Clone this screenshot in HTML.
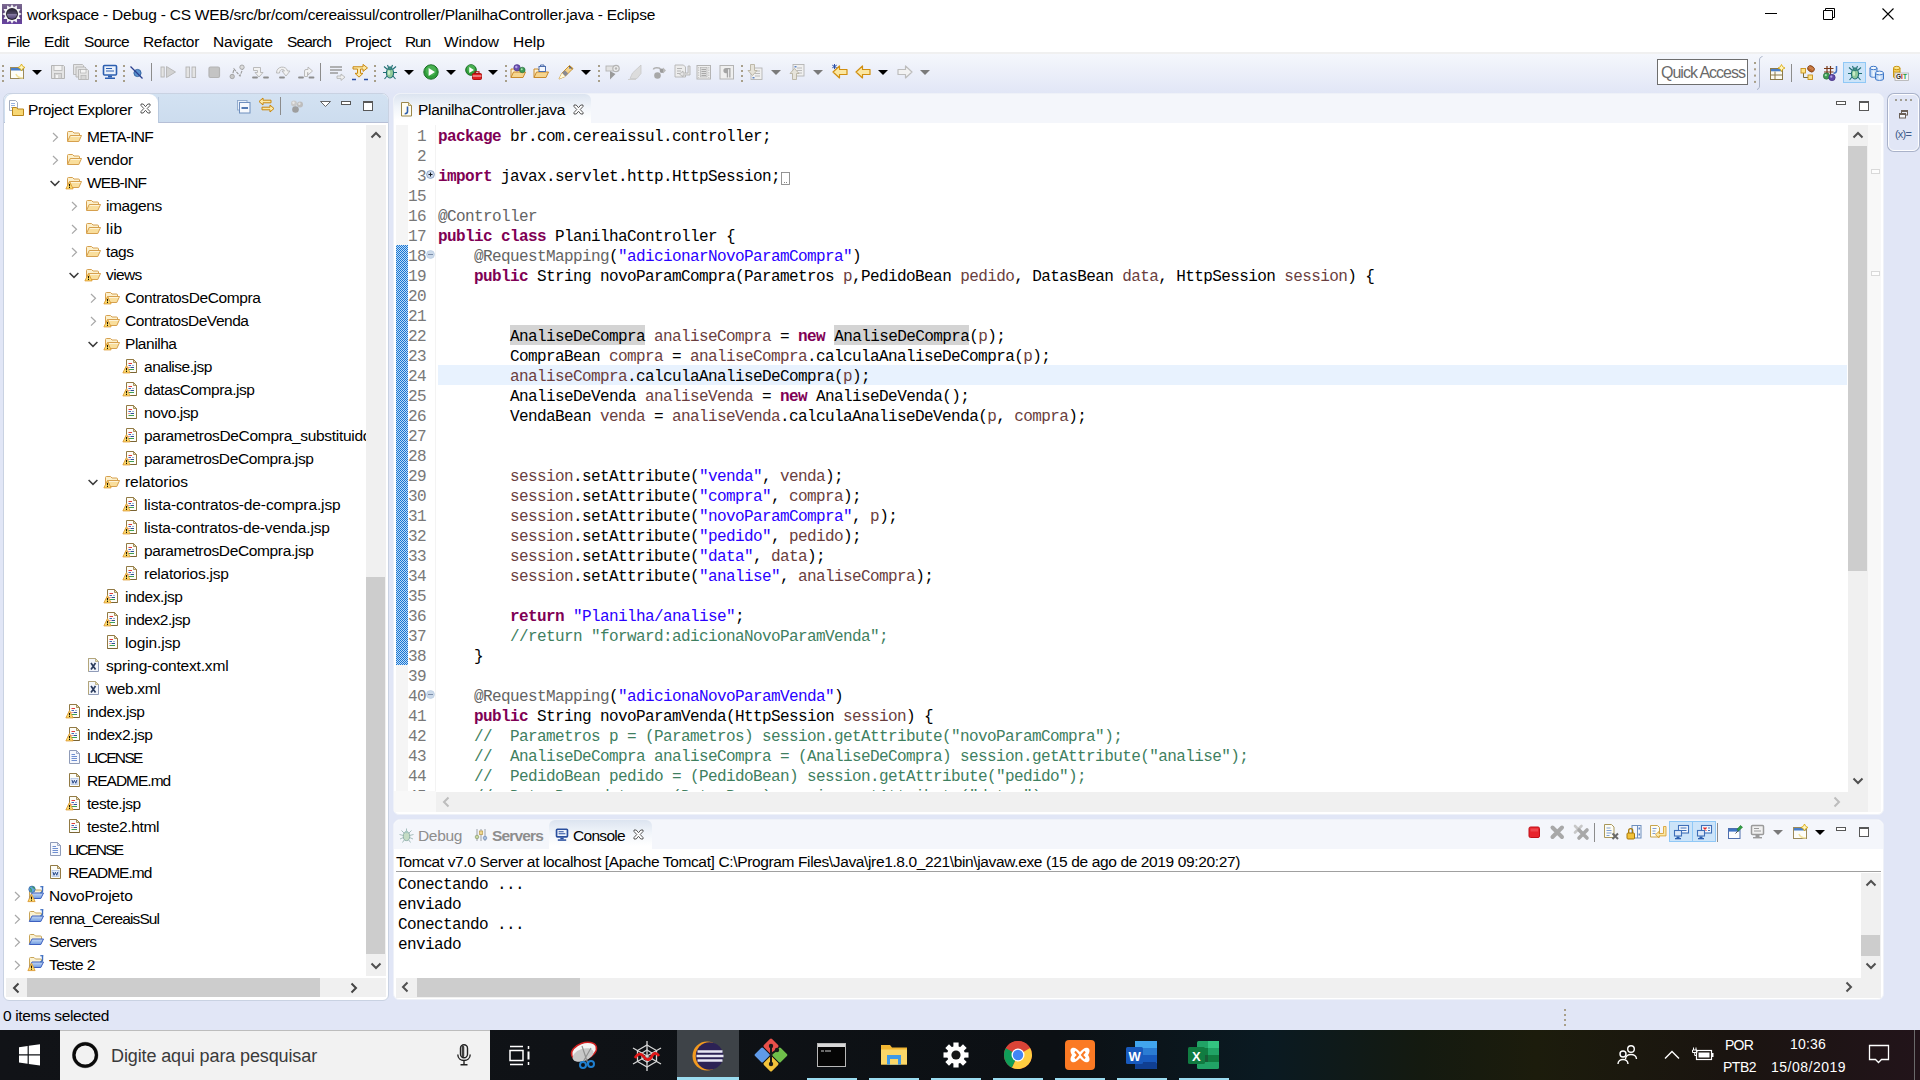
<!DOCTYPE html>
<html lang="pt-BR"><head><meta charset="utf-8"><title>workspace - Debug - Eclipse</title>
<style>
html,body{margin:0;padding:0;background:#e1e6f6;}
body{width:1920px;height:1080px;overflow:hidden;position:relative;font-family:"Liberation Sans",sans-serif;}
#root{position:absolute;left:0;top:0;width:1920px;height:1080px;overflow:hidden;background:#e1e6f6;}
.t{position:absolute;white-space:pre;line-height:1;}
.a{position:absolute;}
svg{position:absolute;overflow:visible;}
.code{position:absolute;white-space:pre;font-family:"Liberation Mono",monospace;font-size:16px;letter-spacing:-0.6px;line-height:20px;color:#000;}
.k{color:#7f0055;font-weight:bold;}
.s{color:#2a00ff;}
.c{color:#3f7f5f;}
.an{color:#646464;}
.v{color:#6a3e3e;}
.oc{background:#d4d4d4;display:inline-block;height:20px;vertical-align:top;margin-top:-2px;padding-top:2px;box-sizing:border-box;}
.ln{position:absolute;font-family:"Liberation Mono",monospace;font-size:16px;letter-spacing:-0.6px;line-height:20px;color:#787878;text-align:right;white-space:pre;}

</style></head><body>
<div id="root">
<div class="a" style="left:0px;top:0px;width:1920px;height:30px;background:#fff;"></div><span id="t1" class="t" style="left:27px;top:7px;font-size:15.5px;color:#000;font-weight:normal;font-family:'Liberation Sans',sans-serif;letter-spacing:-0.231px;">workspace - Debug - CS WEB/src/br/com/cereaissul/controller/PlanilhaController.java - Eclipse</span><svg style="left:1760px;top:4px" width="140" height="22" viewBox="0 0 140 22"><path d="M5 9.500h12" stroke="#000" stroke-width="1" fill="none"/><path d="M63.500 6.500h9v9h-9z M65.500 6.500v-2h9v9h-2" stroke="#000" stroke-width="1" fill="none"/><path d="M122.500 4.500l11 11M133.500 4.500l-11 11" stroke="#000" stroke-width="1.100" fill="none"/></svg><svg style="left:2px;top:4px" width="20" height="20" viewBox="0 0 20 20"><defs><linearGradient id="eg" x1="0" y1="0" x2="0" y2="1"><stop offset="0" stop-color="#7c6a92"/><stop offset=".5" stop-color="#5b4479"/><stop offset="1" stop-color="#6843a2"/></linearGradient><linearGradient id="eb" x1="0" y1="0" x2="0" y2="1"><stop offset="0" stop-color="#2a2438"/><stop offset=".45" stop-color="#4a4260"/><stop offset=".55" stop-color="#8478a0"/><stop offset="1" stop-color="#4a3a70"/></linearGradient></defs><rect x="0" y="0" width="20" height="20" fill="url(#eg)"/><polygon points="10.00,0.20 11.81,3.24 14.90,1.51 14.95,5.05 18.49,5.10 16.76,8.19 19.80,10.00 16.76,11.81 18.49,14.90 14.95,14.95 14.90,18.49 11.81,16.76 10.00,19.80 8.19,16.76 5.10,18.49 5.05,14.95 1.51,14.90 3.24,11.81 0.20,10.00 3.24,8.19 1.51,5.10 5.05,5.05 5.10,1.51 8.19,3.24" fill="#f4f4f6"/><circle cx="10" cy="10" r="6" fill="#26222e"/><circle cx="10" cy="10" r="5" fill="url(#eb)"/></svg><div class="a" style="left:0px;top:30px;width:1920px;height:22px;background:#fff;"></div><div class="a" style="left:0px;top:52px;width:1920px;height:2px;background:#f0f0f0;"></div><span id="t2" class="t" style="left:7px;top:34px;font-size:15.5px;color:#000;font-weight:normal;font-family:'Liberation Sans',sans-serif;letter-spacing:-0.496px;">File</span><span id="t3" class="t" style="left:44px;top:34px;font-size:15.5px;color:#000;font-weight:normal;font-family:'Liberation Sans',sans-serif;letter-spacing:-0.430px;">Edit</span><span id="t4" class="t" style="left:84px;top:34px;font-size:15.5px;color:#000;font-weight:normal;font-family:'Liberation Sans',sans-serif;letter-spacing:-0.685px;">Source</span><span id="t5" class="t" style="left:143px;top:34px;font-size:15.5px;color:#000;font-weight:normal;font-family:'Liberation Sans',sans-serif;letter-spacing:-0.324px;">Refactor</span><span id="t6" class="t" style="left:213px;top:34px;font-size:15.5px;color:#000;font-weight:normal;font-family:'Liberation Sans',sans-serif;letter-spacing:-0.148px;">Navigate</span><span id="t7" class="t" style="left:287px;top:34px;font-size:15.5px;color:#000;font-weight:normal;font-family:'Liberation Sans',sans-serif;letter-spacing:-0.854px;">Search</span><span id="t8" class="t" style="left:345px;top:34px;font-size:15.5px;color:#000;font-weight:normal;font-family:'Liberation Sans',sans-serif;letter-spacing:-0.321px;">Project</span><span id="t9" class="t" style="left:405px;top:34px;font-size:15.5px;color:#000;font-weight:normal;font-family:'Liberation Sans',sans-serif;letter-spacing:-1.146px;">Run</span><span id="t10" class="t" style="left:444px;top:34px;font-size:15.5px;color:#000;font-weight:normal;font-family:'Liberation Sans',sans-serif;letter-spacing:-0.023px;">Window</span><span id="t11" class="t" style="left:513px;top:34px;font-size:15.5px;color:#000;font-weight:normal;font-family:'Liberation Sans',sans-serif;letter-spacing:0.027px;">Help</span><div class="a" style="left:0px;top:54px;width:1920px;height:39px;background:linear-gradient(#f5f7fc,#e1e6f6);"></div><svg style="left:2px;top:65px" width="2" height="20" viewBox="0 0 2 20"><rect x="0" y="0" width="2" height="2" fill="#a89f8a"/><rect x="0" y="5" width="2" height="2" fill="#a89f8a"/><rect x="0" y="10" width="2" height="2" fill="#a89f8a"/><rect x="0" y="15" width="2" height="2" fill="#a89f8a"/></svg><svg style="left:9px;top:64px" width="16" height="16" viewBox="0 0 16 16"><rect x="1.5" y="3.5" width="13" height="11" fill="#fdfdf8" stroke="#9c8a5a"/><rect x="2" y="4" width="12" height="2.5" fill="#4a7fc9"/><path d="M14 14c-3 0-6-1-7-4" stroke="#f2e3a0" stroke-width="1.5" fill="none"/><path d="M12.5 0l1.2 2.3 2.3 1.2-2.3 1.2-1.2 2.3-1.2-2.3L9 3.5l2.3-1.2z" fill="#fff6c0" stroke="#d9a400" stroke-width=".8"/></svg><svg style="left:32px;top:70px" width="10" height="5" viewBox="0 0 10 5"><path d="M0 0h10l-5 5z" fill="#000"/></svg><svg style="left:50px;top:64px" width="16" height="16" viewBox="0 0 16 16"><path d="M1.5 1.5h12l1 1v12h-13z" fill="#e4e4e4" stroke="#b4b4b4"/><rect x="4" y="1.5" width="8" height="5" fill="#f4f4f4" stroke="#b4b4b4" stroke-width=".8"/><rect x="4.5" y="9.5" width="7" height="5" fill="#d6d6d6" stroke="#b4b4b4" stroke-width=".8"/><rect x="6" y="11" width="2" height="3" fill="#f4f4f4"/></svg><svg style="left:73px;top:64px" width="16" height="16" viewBox="0 0 16 16"><path d="M.5 .5h9l1 1v9h-10z" fill="#e4e4e4" stroke="#b4b4b4" stroke-width=".9"/><path d="M3 3h9l1 1v9h-10z" fill="#e4e4e4" stroke="#b4b4b4" stroke-width=".9"/><path d="M5.5 5.5h9l1 1v9h-10z" fill="#e4e4e4" stroke="#b4b4b4" stroke-width=".9"/><rect x="7.5" y="5.5" width="5.5" height="3.5" fill="#f4f4f4" stroke="#b4b4b4" stroke-width=".7"/><rect x="8" y="11.5" width="5" height="4" fill="#d6d6d6" stroke="#b4b4b4" stroke-width=".7"/></svg><svg style="left:95px;top:65px" width="2" height="20" viewBox="0 0 2 20"><rect x="0" y="0" width="2" height="2" fill="#a89f8a"/><rect x="0" y="5" width="2" height="2" fill="#a89f8a"/><rect x="0" y="10" width="2" height="2" fill="#a89f8a"/><rect x="0" y="15" width="2" height="2" fill="#a89f8a"/></svg><svg style="left:102px;top:64px" width="16" height="16" viewBox="0 0 16 16"><rect x="1.5" y="1.5" width="13" height="9.5" rx="1" fill="#eaf1fb" stroke="#2d5fb0" stroke-width="1.6"/><path d="M4 4.5h6M4 7h8" stroke="#2d5fb0" stroke-width="1.1"/><rect x="6" y="11.5" width="4" height="2" fill="#2d5fb0"/><rect x="3" y="13.5" width="10" height="1.5" fill="#2d5fb0"/></svg><svg style="left:123px;top:65px" width="2" height="20" viewBox="0 0 2 20"><rect x="0" y="0" width="2" height="2" fill="#a89f8a"/><rect x="0" y="5" width="2" height="2" fill="#a89f8a"/><rect x="0" y="10" width="2" height="2" fill="#a89f8a"/><rect x="0" y="15" width="2" height="2" fill="#a89f8a"/></svg><svg style="left:129px;top:64px" width="16" height="16" viewBox="0 0 16 16"><circle cx="8.5" cy="9" r="3.6" fill="#5a93cf" stroke="#2f5f9e" stroke-width=".9"/><path d="M1.5 2.5l12 12" stroke="#2a3f8f" stroke-width="1.3"/></svg><div class="a" style="left:151px;top:63px;width:1px;height:18px;background:#8c8c8c;"></div><svg style="left:160px;top:64px" width="16" height="16" viewBox="0 0 16 16"><rect x="1" y="3" width="3.2" height="10" fill="#e4e4e4" stroke="#b4b4b4" stroke-width=".9"/><path d="M6.5 2.5l9 5.5-9 5.5z" fill="#d2d2d2" stroke="#b4b4b4" stroke-width=".9"/></svg><svg style="left:183px;top:64px" width="16" height="16" viewBox="0 0 16 16"><rect x="3" y="3" width="3.6" height="10.5" fill="#e4e4e4" stroke="#b4b4b4" stroke-width=".9"/><rect x="9" y="3" width="3.6" height="10.5" fill="#e4e4e4" stroke="#b4b4b4" stroke-width=".9"/></svg><svg style="left:206px;top:64px" width="16" height="16" viewBox="0 0 16 16"><rect x="3" y="3" width="10.5" height="10.5" rx="1.5" fill="#c4c4c4" stroke="#b4b4b4" stroke-width="1.2"/></svg><svg style="left:229px;top:64px" width="16" height="16" viewBox="0 0 16 16"><path d="M3 13l2-8 6 7 3-8" stroke="#9a9a9a" stroke-width="1.1" fill="none" stroke-dasharray="3 1"/><circle cx="3.2" cy="12.5" r="2.2" fill="#c8c8c8" stroke="#9a9a9a" stroke-width=".8"/><circle cx="13" cy="3.2" r="2.2" fill="#dcdcdc" stroke="#9a9a9a" stroke-width=".8"/></svg><svg style="left:252px;top:64px" width="16" height="16" viewBox="0 0 16 16"><path d="M1.5 3.5h7v5h2.5l-4 4.5-4-4.5h2.5v-2h-4z" fill="#f2f2f2" stroke="#b4b4b4" stroke-width=".9" stroke-linejoin="round"/><path d="M1 13.5h4M12 13.5h4" stroke="#8e8e8e" stroke-width="1.8" stroke-linecap="round"/></svg><svg style="left:275px;top:64px" width="16" height="16" viewBox="0 0 16 16"><path d="M1.5 9c0-7.5 10-7.5 11-2h2.5l-4 5-4-5h2.5c-1-2.5-5-2-5 2z" fill="#f2f2f2" stroke="#b4b4b4" stroke-width=".9" stroke-linejoin="round"/><path d="M5 13.5h4" stroke="#8e8e8e" stroke-width="1.8" stroke-linecap="round"/></svg><svg style="left:298px;top:64px" width="16" height="16" viewBox="0 0 16 16"><path d="M6.5 12.5v-5.500q0-1.500 1.500-1.500h2v-2.500l4.500 4-4.500 4v-2.500h-.5v4z" fill="#f2f2f2" stroke="#b4b4b4" stroke-width=".9" stroke-linejoin="round"/><path d="M1 13.5h4M11.5 13.5h4" stroke="#8e8e8e" stroke-width="1.8" stroke-linecap="round"/></svg><div class="a" style="left:320px;top:63px;width:1px;height:18px;background:#8c8c8c;"></div><svg style="left:329px;top:64px" width="16" height="16" viewBox="0 0 16 16"><path d="M1 3h12M1 6h12M1 9h8" stroke="#9a9a9a" stroke-width="1.5"/><path d="M8 12h4v-2l4 3.200-4 3.200v-2h-4z" fill="#f0f0f0" stroke="#b4b4b4" stroke-width=".9"/></svg><svg style="left:352px;top:64px" width="16" height="16" viewBox="0 0 16 16"><path d="M1 4.500h10v-2.500l4.500 3.700-4.500 3.700v-2.500h-2.500v4.500h2.500l-4 4-4-4h2.500v-4.500h-4.500z" fill="#fbe8a6" stroke="#c8860a" stroke-width="1" transform="translate(0,-1.500) scale(1,.95)"/><path d="M0 15.500h4M12 15.500h4" stroke="#2a4fa8" stroke-width="1.600"/></svg><svg style="left:374px;top:65px" width="2" height="20" viewBox="0 0 2 20"><rect x="0" y="0" width="2" height="2" fill="#a89f8a"/><rect x="0" y="5" width="2" height="2" fill="#a89f8a"/><rect x="0" y="10" width="2" height="2" fill="#a89f8a"/><rect x="0" y="15" width="2" height="2" fill="#a89f8a"/></svg><svg style="left:382px;top:64px" width="16" height="16" viewBox="0 0 16 16"><g stroke="#1f6e72" stroke-width="1.1" fill="none"><path d="M5.500 5.500L2 2.500M10.500 5.500L14 2.500M4.500 8.500H1M11.500 8.500H15M5.500 11.500L2.500 15M10.500 11.500L13.500 15M6.500 3.500L5.500 1M9.500 3.500L10.500 1"/></g><ellipse cx="8" cy="9" rx="3.600" ry="5" fill="#8fc89a" stroke="#1f6e72" stroke-width="1.100"/><ellipse cx="8" cy="4.300" rx="2" ry="1.500" fill="#3f8f86" stroke="#1f6e72" stroke-width=".8"/><ellipse cx="7" cy="8.500" rx="1.200" ry="2.500" fill="#c9ecc8"/></svg><svg style="left:404px;top:70px" width="10" height="5" viewBox="0 0 10 5"><path d="M0 0h10l-5 5z" fill="#000"/></svg><svg style="left:423px;top:64px" width="16" height="16" viewBox="0 0 16 16"><circle cx="8" cy="8" r="7.2" fill="#2f9e3a" stroke="#1d6e28" stroke-width="1"/><circle cx="8" cy="6.500" r="5.184" fill="#5cc064" opacity=".55"/><path d="M5.624 4.039999999999999L11.96 8L5.624 11.96z" fill="#fff"/></svg><svg style="left:446px;top:70px" width="10" height="5" viewBox="0 0 10 5"><path d="M0 0h10l-5 5z" fill="#000"/></svg><svg style="left:463px;top:62px" width="16" height="16" viewBox="0 0 16 16"><circle cx="8" cy="8" r="5.3" fill="#2f9e3a" stroke="#1d6e28" stroke-width="1"/><circle cx="8" cy="6.500" r="3.816" fill="#5cc064" opacity=".55"/><path d="M6.2509999999999994 5.085L10.915 8L6.2509999999999994 10.915z" fill="#fff"/></svg><svg style="left:472px;top:71px" width="10" height="9" viewBox="0 0 10 9"><rect x=".500" y="2.500" width="9" height="6" rx="1" fill="#e02020" stroke="#a80808" stroke-width=".9"/><path d="M3 2.500v-1.800h4v1.800" fill="none" stroke="#a80808" stroke-width="1.100"/><path d="M.500 5h9" stroke="#fff" stroke-width=".8"/></svg><svg style="left:488px;top:70px" width="10" height="5" viewBox="0 0 10 5"><path d="M0 0h10l-5 5z" fill="#000"/></svg><svg style="left:505px;top:65px" width="2" height="20" viewBox="0 0 2 20"><rect x="0" y="0" width="2" height="2" fill="#a89f8a"/><rect x="0" y="5" width="2" height="2" fill="#a89f8a"/><rect x="0" y="10" width="2" height="2" fill="#a89f8a"/><rect x="0" y="15" width="2" height="2" fill="#a89f8a"/></svg><svg style="left:510px;top:64px" width="16" height="16" viewBox="0 0 16 16"><path d="M1 13.500v-8.500h4l1.500 1.500h6v2" fill="#fdf1cf" stroke="#c98a2c" stroke-width="1"/><path d="M1 13.500l2.500-5.500h12l-2.500 5.500z" fill="#f6d58e" stroke="#c98a2c" stroke-width="1"/><circle cx="7" cy="3.800" r="3.200" fill="#6a4fb0" stroke="#473287" stroke-width=".6"/><circle cx="6.300" cy="3" r="1.200" fill="#b7a6e6"/><circle cx="12.300" cy="6" r="2.800" fill="#3d9a55" stroke="#256b38" stroke-width=".6"/><circle cx="11.700" cy="5.200" r="1" fill="#a7e0b0"/></svg><svg style="left:533px;top:64px" width="16" height="16" viewBox="0 0 16 16"><path d="M1 13.500v-8.500h4l1.500 1.500h6v2" fill="#fdf1cf" stroke="#c98a2c" stroke-width="1"/><path d="M1 13.500l2.500-5.500h12l-2.500 5.500z" fill="#f6d58e" stroke="#c98a2c" stroke-width="1"/><rect x="6" y="2.500" width="6.500" height="5" fill="#f4f7fd" stroke="#4f6fae" stroke-width="1"/><path d="M7.500 2.500v-1.500h3.500v1.500" stroke="#4f6fae" fill="none" stroke-width="1"/></svg><svg style="left:558px;top:64px" width="16" height="16" viewBox="0 0 16 16"><path d="M1 15l3-6 7.500-7.500 3.500 3-8 8z" fill="#f4d28a" stroke="#c58a20" stroke-width=".9"/><path d="M4 9l3.200 3.400 3-3-3.300-3.200z" fill="#8a8a92"/><path d="M11 2l3.500 3" stroke="#7a5a20" stroke-width="1"/><circle cx="12" cy="3.800" r=".9" fill="#3f5fae"/><path d="M1 15l3-6 3.200 3.400z" fill="#fff8d8"/></svg><svg style="left:581px;top:70px" width="10" height="5" viewBox="0 0 10 5"><path d="M0 0h10l-5 5z" fill="#000"/></svg><svg style="left:598px;top:65px" width="2" height="20" viewBox="0 0 2 20"><rect x="0" y="0" width="2" height="2" fill="#a89f8a"/><rect x="0" y="5" width="2" height="2" fill="#a89f8a"/><rect x="0" y="10" width="2" height="2" fill="#a89f8a"/><rect x="0" y="15" width="2" height="2" fill="#a89f8a"/></svg><svg style="left:605px;top:64px" width="16" height="16" viewBox="0 0 16 16"><rect x="1" y="2" width="8" height="5" fill="#e2e2e2" stroke="#b4b4b4" stroke-width=".9"/><circle cx="11" cy="4.500" r="3.200" fill="#ececec" stroke="#b4b4b4" stroke-width="1.200"/><circle cx="11" cy="4.500" r="1.200" fill="#b4b4b4"/><path d="M5 7v8.500l5.500-5.500z" fill="#9a9a9a"/></svg><svg style="left:628px;top:64px" width="16" height="16" viewBox="0 0 16 16"><path d="M2 14.500l2.500-5.500 8.500-8v8.500l-4 5z" fill="#dcdcdc" stroke="#c8c8c8" stroke-width=".8"/><path d="M0 15.500h8" stroke="#cfcfcf" stroke-width="1"/></svg><svg style="left:651px;top:64px" width="16" height="16" viewBox="0 0 16 16"><circle cx="6.500" cy="11.500" r="3.300" fill="#a8a8a8"/><path d="M2.500 5.500c0-2.500 6.500-2.500 7 0" stroke="#b0b0b0" stroke-width="1.500" fill="none"/><circle cx="11" cy="6.800" r="2.300" fill="#9c9c9c"/><path d="M12 3.500l3 3-3 3" fill="#b8b8b8"/></svg><svg style="left:674px;top:64px" width="16" height="16" viewBox="0 0 16 16"><path d="M1 1h8.500l2 2v10h-10.500z" fill="#ededed" stroke="#b4b4b4" stroke-width=".9"/><path d="M3 4.500h5M3 7h4M3 9.500h3" stroke="#b4b4b4" stroke-width="1"/><path d="M14 2v7h-5v-2l-3.500 3 3.500 3v-2h7v-9z" fill="#e4e4e4" stroke="#b4b4b4" stroke-width=".9"/></svg><svg style="left:696px;top:64px" width="16" height="16" viewBox="0 0 16 16"><rect x="1" y="1.500" width="13.500" height="13.500" fill="#efefef" stroke="#b4b4b4" stroke-width="1"/><rect x="4.500" y="3.500" width="6.500" height="9.500" fill="#dedede" stroke="#b4b4b4" stroke-width=".7"/><path d="M5.500 5.500h4.500M5.500 7.500h4.500M5.500 9.500h4.500M5.500 11.500h4.500" stroke="#9a9a9a" stroke-width=".8"/><path d="M2.700 3v11M12.800 3v11" stroke="#b4b4b4" stroke-width=".8" stroke-dasharray="1.500 1"/></svg><svg style="left:719px;top:64px" width="16" height="16" viewBox="0 0 16 16"><rect x="1" y="1.500" width="13.500" height="13.500" fill="#efefef" stroke="#b4b4b4" stroke-width="1"/><path d="M11.500 4h-4.500a2.600 2.600 0 0 0 0 5.200h.8v4.300h1.300v-8.300h1.100v8.300h1.300z" fill="#a4a4a4"/></svg><svg style="left:741px;top:65px" width="2" height="20" viewBox="0 0 2 20"><rect x="0" y="0" width="2" height="2" fill="#a89f8a"/><rect x="0" y="5" width="2" height="2" fill="#a89f8a"/><rect x="0" y="10" width="2" height="2" fill="#a89f8a"/><rect x="0" y="15" width="2" height="2" fill="#a89f8a"/></svg><svg style="left:747px;top:64px" width="16" height="16" viewBox="0 0 16 16"><rect x="4" y="4" width="11" height="11.500" fill="#f0f0f0" stroke="#b4b4b4" stroke-width=".9"/><path d="M8 7h5M8 9.500h5M8 12h5" stroke="#b4b4b4" stroke-width=".9"/><rect x="5.500" y="13" width="2" height="1.500" fill="#5f86c8"/><path d="M3.500 .500h4v6h2.500l-4.500 5-4.500-5h2.500z" fill="#e6e3da" stroke="#b8b2a2" stroke-width=".9"/></svg><svg style="left:771px;top:70px" width="10" height="5" viewBox="0 0 10 5"><path d="M0 0h10l-5 5z" fill="#7a7a7a"/></svg><svg style="left:789px;top:64px" width="16" height="16" viewBox="0 0 16 16"><rect x="4" y=".500" width="11" height="11.500" fill="#f0f0f0" stroke="#b4b4b4" stroke-width=".9"/><path d="M8 4h5M8 6.500h5M8 9h5" stroke="#b4b4b4" stroke-width=".9"/><rect x="5.500" y="2" width="2" height="1.500" fill="#5f86c8"/><path d="M3.500 15.500h4v-6h2.500l-4.500-5-4.500 5h2.500z" fill="#e6e3da" stroke="#b8b2a2" stroke-width=".9"/></svg><svg style="left:813px;top:70px" width="10" height="5" viewBox="0 0 10 5"><path d="M0 0h10l-5 5z" fill="#7a7a7a"/></svg><svg style="left:832px;top:64px" width="16" height="16" viewBox="0 0 16 16"><path d="M1 8l6.500-6v3.500h7.500v5h-7.500v3.500z" fill="#fbe7a2" stroke="#d18f10" stroke-width="1.200" stroke-linejoin="round"/><path d="M2.500 0v5M.300 1.200l4.400 2.600M4.700 1.200L.300 3.800" stroke="#2a4fa8" stroke-width="1"/></svg><svg style="left:855px;top:64px" width="16" height="16" viewBox="0 0 16 16"><path d="M1 8l6.500-6v3.500h7.500v5h-7.500v3.500z" fill="#fbe7a2" stroke="#d18f10" stroke-width="1.200" stroke-linejoin="round"/></svg><svg style="left:878px;top:70px" width="10" height="5" viewBox="0 0 10 5"><path d="M0 0h10l-5 5z" fill="#000"/></svg><svg style="left:897px;top:64px" width="16" height="16" viewBox="0 0 16 16"><g transform="translate(16,0) scale(-1,1)"><path d="M1 8l6.500-6v3.500h7.500v5h-7.500v3.500z" fill="#f2f2f2" stroke="#bdbdbd" stroke-width="1.200" stroke-linejoin="round"/></g></svg><svg style="left:920px;top:70px" width="10" height="5" viewBox="0 0 10 5"><path d="M0 0h10l-5 5z" fill="#7a7a7a"/></svg><div class="a" style="left:1657px;top:59px;width:91px;height:26px;background:#fff;box-sizing:border-box;border:1px solid #6e6e6e;"></div><span id="t12" class="t" style="left:1661px;top:65px;font-size:16px;color:#6a6a6a;font-weight:normal;font-family:'Liberation Sans',sans-serif;letter-spacing:-1.003px;">Quick Access</span><svg style="left:1754px;top:62px" width="2" height="25.2" viewBox="0 0 2 25.2"><rect x="0" y="0.0" width="2" height="2" fill="#a89f8a"/><rect x="0" y="6.3" width="2" height="2" fill="#a89f8a"/><rect x="0" y="12.6" width="2" height="2" fill="#a89f8a"/><rect x="0" y="18.9" width="2" height="2" fill="#a89f8a"/></svg><svg style="left:1757px;top:56px" width="6" height="34" viewBox="0 0 6 34"><path d="M5.500 .500c-2 .500-3 1.500-3 3.500v26c0 2-1 3-2.500 3.500" fill="none" stroke="#a9b2c6" stroke-width="1"/></svg><svg style="left:1769px;top:65px" width="16" height="16" viewBox="0 0 16 16"><rect x="1.500" y="3.500" width="12" height="11" fill="#fbfaf2" stroke="#8a7a4a" stroke-width="1"/><rect x="2" y="4" width="11" height="2.300" fill="#4a7fc9"/><path d="M6 6.500v8M1.500 10h12" stroke="#8a7a4a" stroke-width="1"/><path d="M12.500 -.5l1.200 2.300 2.300 1.200-2.300 1.200-1.200 2.300-1.200-2.300L9 3l2.300-1.200z" fill="#fff6c0" stroke="#d9a400" stroke-width=".8"/></svg><div class="a" style="left:1791px;top:64px;width:1px;height:18px;background:#8c8c8c;"></div><svg style="left:1800px;top:65px" width="16" height="16" viewBox="0 0 16 16"><path d="M3.500 7v5.500h4.500M3.500 9h0" stroke="#7a6a3a" stroke-width="1" fill="none"/><rect x="1" y="3.500" width="4.500" height="4.500" fill="#fde48a" stroke="#c8901a" stroke-width=".9"/><rect x="8" y="10" width="4.500" height="4.500" fill="#fde48a" stroke="#c8901a" stroke-width=".9"/><ellipse cx="11" cy="3.800" rx="3.600" ry="2.900" transform="rotate(35 11 3.800)" fill="#b8642a" stroke="#7a3a10" stroke-width=".7"/><path d="M8.500 2.500l5 2.600M9.300 1.500l4.500 2.500" stroke="#e0a070" stroke-width=".6"/></svg><svg style="left:1822px;top:65px" width="16" height="16" viewBox="0 0 16 16"><path d="M5 1v9M8.500 1v9M2 3.500h9.500M2 7h9.500" stroke="#7a3a1a" stroke-width="1.200"/><path d="M14.500 1v4.500c0 2-1 2.700-3 2.700" stroke="#3f6fc0" stroke-width="1.500" fill="none"/><circle cx="4.500" cy="11" r="3.200" fill="#3f9a52" stroke="#256b38" stroke-width=".6"/><circle cx="3.800" cy="10.200" r="1.100" fill="#a7e0b0"/><circle cx="10" cy="12.500" r="3.200" fill="#5f48a8" stroke="#3a2a78" stroke-width=".6"/><circle cx="9.300" cy="11.700" r="1.100" fill="#b7a6e6"/></svg><div class="a" style="left:1843px;top:62px;width:23px;height:21px;background:#cce4f9;box-sizing:border-box;border:1px solid #90c8f6;"></div><svg style="left:1847px;top:65px" width="16" height="16" viewBox="0 0 16 16"><g stroke="#1f6e72" stroke-width="1.1" fill="none"><path d="M5.500 5.500L2 2.500M10.500 5.500L14 2.500M4.500 8.500H1M11.500 8.500H15M5.500 11.500L2.500 15M10.500 11.500L13.500 15M6.500 3.500L5.500 1M9.500 3.500L10.500 1"/></g><ellipse cx="8" cy="9" rx="3.600" ry="5" fill="#8fc89a" stroke="#1f6e72" stroke-width="1.100"/><ellipse cx="8" cy="4.300" rx="2" ry="1.500" fill="#3f8f86" stroke="#1f6e72" stroke-width=".8"/><ellipse cx="7" cy="8.500" rx="1.200" ry="2.500" fill="#c9ecc8"/></svg><svg style="left:1869px;top:65px" width="16" height="16" viewBox="0 0 16 16"><defs><linearGradient id="dbg" x1="0" y1="0" x2="1" y2="0"><stop offset="0" stop-color="#9fc4f0"/><stop offset=".5" stop-color="#eef5fd"/><stop offset="1" stop-color="#a8c8f0"/></linearGradient></defs><path d="M1 3v8c0 1.700 7 1.700 7 0v-8" fill="url(#dbg)" stroke="#3f78c8" stroke-width="1"/><ellipse cx="4.500" cy="3" rx="3.500" ry="1.700" fill="#f2f7fd" stroke="#3f78c8" stroke-width="1"/><path d="M6.500 8v6c0 1.800 8 1.800 8 0v-6" fill="url(#dbg)" stroke="#3f78c8" stroke-width="1"/><ellipse cx="10.500" cy="8" rx="4" ry="1.900" fill="#eef5fd" stroke="#3f78c8" stroke-width="1"/></svg><svg style="left:1892px;top:65px" width="17" height="17" viewBox="0 0 17 17"><path d="M1.500 3v9c0 1.500 6.500 1.500 6.500 0v-9" fill="#f6cf5a" stroke="#c89412" stroke-width="1"/><ellipse cx="4.750" cy="3" rx="3.250" ry="1.700" fill="#fde68a" stroke="#c89412" stroke-width="1"/><path d="M1.500 6c0 1.500 6.500 1.500 6.500 0M1.500 9c0 1.500 6.500 1.500 6.500 0" fill="none" stroke="#c89412" stroke-width=".8"/><rect x="3" y="8" width="13.500" height="7.500" fill="#f4f4f4" stroke="#b0b0b0" stroke-width=".8"/><text x="4" y="14.300" font-family="Liberation Sans,sans-serif" font-size="6.500" font-weight="bold"><tspan fill="#222">G</tspan><tspan fill="#d02020">I</tspan><tspan fill="#2a9a3a">T</tspan></text></svg><div class="a" style="left:3px;top:93px;width:386px;height:908px;background:#fff;border-radius:7px 7px 6px 6px;box-sizing:border-box;border:1px solid #c9d2e2;"></div><div class="a" style="left:4px;top:94px;width:384px;height:29px;background:linear-gradient(#d3e2f2,#ccdcee);border-radius:6px 6px 0 0;"></div><div class="a" style="left:4px;top:122px;width:384px;height:1px;background:#b6bfd6;"></div><div class="a" style="left:5px;top:94px;width:153px;height:29px;background:#fff;border-radius:8px 9px 0 0;"></div><div class="a" style="left:158px;top:97px;width:1px;height:26px;background:#b9c9de;"></div><span id="t13" class="t" style="left:28px;top:102px;font-size:15.5px;color:#000;font-weight:normal;font-family:'Liberation Sans',sans-serif;letter-spacing:-0.392px;">Project Explorer</span><svg style="left:8px;top:100px" width="17" height="17" viewBox="0 0 17 17"><path d="M1.500 .500h6l2 2v8h-8z" fill="#fff" stroke="#9aa4b8" stroke-width=".9"/><path d="M3 3.500h4M3 5.500h4M3 7.500h3" stroke="#7f9fd4" stroke-width=".8"/><path d="M4.500 15.500v-8h4l1.200 1.500h5.800v6.500z" fill="#f7d774" stroke="#b9861c" stroke-width="1"/></svg><svg style="left:140px;top:103px" width="11" height="11" viewBox="0 0 11 11"><path d="M1 1h2.200l2.300 2.700 2.300-2.700h2.200v1.500l-2.800 3 2.800 3v1.500h-2.200l-2.300-2.700-2.300 2.700h-2.200v-1.500l2.800-3-2.800-3z" fill="#fff" stroke="#444" stroke-width=".9" stroke-linejoin="round"/></svg><svg style="left:237px;top:100px" width="14" height="14" viewBox="0 0 14 14"><rect x=".500" y=".500" width="9.500" height="9.500" fill="#e8f0fa" stroke="#8ea8cc" stroke-width=".9"/><rect x="2.500" y="2.500" width="10.500" height="10.500" fill="#f6f9fd" stroke="#6f8fbe" stroke-width="1"/><path d="M4.500 8h6.500" stroke="#1f4f9a" stroke-width="1.500"/></svg><svg style="left:258px;top:97px" width="17" height="17" viewBox="0 0 17 17"><path d="M1 4.500l4-3.500v2.200h8v2.600h-8v2.200z" fill="#fbe9a8" stroke="#c8860a" stroke-width="1" stroke-linejoin="round"/><path d="M16 11.500l-4 3.500v-2.200h-8v-2.600h8v-2.200z" fill="#fbe9a8" stroke="#c8860a" stroke-width="1" stroke-linejoin="round"/></svg><div class="a" style="left:280px;top:97px;width:1px;height:18px;background:#8c8c8c;"></div><svg style="left:290px;top:99px" width="15" height="15" viewBox="0 0 15 15"><circle cx="4" cy="4.500" r="3" fill="#c9c9c9"/><circle cx="10" cy="5.500" r="3" fill="#bdbdbd"/><circle cx="5.500" cy="10.500" r="3.300" fill="#9e9e9e"/><circle cx="3.500" cy="3.800" r="1.200" fill="#e8e8e8"/><circle cx="9.400" cy="4.800" r="1.200" fill="#e0e0e0"/></svg><svg style="left:320px;top:101px" width="11" height="6" viewBox="0 0 11 6"><path d="M.500 .500h10l-5 5z" fill="#fff" stroke="#555" stroke-width=".9"/></svg><svg style="left:341px;top:101px" width="11" height="5" viewBox="0 0 11 5"><rect x=".500" y=".500" width="9" height="3" fill="#fff" stroke="#585858" stroke-width="1"/></svg><svg style="left:363px;top:101px" width="11" height="11" viewBox="0 0 11 11"><rect x=".500" y=".500" width="9" height="9" fill="#fff" stroke="#585858" stroke-width="1"/><path d="M.500 1.500h9" stroke="#585858" stroke-width="1"/></svg><div class="a" style="left:366px;top:125px;width:20px;height:851px;background:#f0f0f0;"></div><div class="a" style="left:366px;top:577px;width:19px;height:377px;background:#cdcdcd;"></div><svg style="left:370px;top:129px" width="12" height="12" viewBox="-6 -6 12 12"><path d="M-4.500 2.500L0 -2L4.500 2.500" fill="none" stroke="#505050" stroke-width="2"/></svg><svg style="left:370px;top:960px" width="12" height="12" viewBox="-6 -6 12 12"><path d="M-4.500 -2.500L0 2L4.500 -2.500" fill="none" stroke="#505050" stroke-width="2"/></svg><div class="a" style="left:6px;top:978px;width:380px;height:19px;background:#f0f0f0;"></div><div class="a" style="left:27px;top:978px;width:293px;height:19px;background:#cdcdcd;"></div><svg style="left:10px;top:981.5px" width="12" height="12" viewBox="-6 -6 12 12"><path d="M2.500 -4.500L-2 0L2.500 4.500" fill="none" stroke="#444" stroke-width="2"/></svg><svg style="left:348px;top:981.5px" width="12" height="12" viewBox="-6 -6 12 12"><path d="M-2.500 -4.500L2 0L-2.500 4.500" fill="none" stroke="#444" stroke-width="2"/></svg><div class="a" style="left:5px;top:123px;width:361px;height:854px;overflow:hidden"><svg style="left:47px;top:9px" width="8" height="10" viewBox="0 0 8 10"><path d="M1 1L5.500 5.300L1 9.600" fill="none" stroke="#a8a8a8" stroke-width="1.200"/></svg><svg style="left:61px;top:5px" width="16" height="16" viewBox="0 0 16 16"><path d="M1.500 13v-8.500q0-1 1-1h4l1.500 1.500h4.500q1 0 1 1v1.500" fill="#fcf0cc" stroke="#d6a04e" stroke-width="1"/><path d="M1.500 13.500l2.700-6h11.300l-2.700 6z" fill="#f9de9c" stroke="#d6a04e" stroke-width="1" stroke-linejoin="round"/><path d="M4.800 8.500h9.500" stroke="#fdf3d8" stroke-width="1"/></svg><span id="t14" class="t" style="left:82px;top:6px;font-size:15.5px;color:#000;font-weight:normal;font-family:'Liberation Sans',sans-serif;letter-spacing:-0.756px;">META-INF</span><svg style="left:47px;top:32px" width="8" height="10" viewBox="0 0 8 10"><path d="M1 1L5.500 5.300L1 9.600" fill="none" stroke="#a8a8a8" stroke-width="1.200"/></svg><svg style="left:61px;top:28px" width="16" height="16" viewBox="0 0 16 16"><path d="M1.500 13v-8.500q0-1 1-1h4l1.500 1.500h4.500q1 0 1 1v1.500" fill="#fcf0cc" stroke="#d6a04e" stroke-width="1"/><path d="M1.500 13.500l2.700-6h11.300l-2.700 6z" fill="#f9de9c" stroke="#d6a04e" stroke-width="1" stroke-linejoin="round"/><path d="M4.800 8.500h9.500" stroke="#fdf3d8" stroke-width="1"/></svg><span id="t15" class="t" style="left:82px;top:29px;font-size:15.5px;color:#000;font-weight:normal;font-family:'Liberation Sans',sans-serif;letter-spacing:-0.234px;">vendor</span><svg style="left:45px;top:57px" width="10" height="7" viewBox="0 0 10 7"><path d="M.600 1L5 5.400L9.400 1" fill="none" stroke="#3c3c3c" stroke-width="1.500"/></svg><svg style="left:61px;top:51px" width="16" height="16" viewBox="0 0 16 16"><path d="M1.500 13v-8.500q0-1 1-1h4l1.500 1.500h4.500q1 0 1 1v1.500" fill="#fcf0cc" stroke="#d6a04e" stroke-width="1"/><path d="M1.500 13.500l2.700-6h11.300l-2.700 6z" fill="#f9de9c" stroke="#d6a04e" stroke-width="1" stroke-linejoin="round"/><path d="M4.800 8.500h9.500" stroke="#fdf3d8" stroke-width="1"/><path d="M3.500 7.400l3.600 7.500h-7.200z" fill="#ffdf6e" stroke="#dc9a34" stroke-width=".9" stroke-linejoin="round"/><path d="M3.500 9.900v2.400" stroke="#1a1200" stroke-width="1.100"/><rect x="2.950" y="12.900" width="1.100" height="1.100" fill="#1a1200"/></svg><span id="t16" class="t" style="left:82px;top:52px;font-size:15.5px;color:#000;font-weight:normal;font-family:'Liberation Sans',sans-serif;letter-spacing:-0.920px;">WEB-INF</span><svg style="left:66px;top:78px" width="8" height="10" viewBox="0 0 8 10"><path d="M1 1L5.500 5.300L1 9.600" fill="none" stroke="#a8a8a8" stroke-width="1.200"/></svg><svg style="left:80px;top:74px" width="16" height="16" viewBox="0 0 16 16"><path d="M1.500 13v-8.500q0-1 1-1h4l1.500 1.500h4.500q1 0 1 1v1.500" fill="#fcf0cc" stroke="#d6a04e" stroke-width="1"/><path d="M1.500 13.500l2.700-6h11.300l-2.700 6z" fill="#f9de9c" stroke="#d6a04e" stroke-width="1" stroke-linejoin="round"/><path d="M4.800 8.500h9.500" stroke="#fdf3d8" stroke-width="1"/></svg><span id="t17" class="t" style="left:101px;top:75px;font-size:15.5px;color:#000;font-weight:normal;font-family:'Liberation Sans',sans-serif;letter-spacing:-0.371px;">imagens</span><svg style="left:66px;top:101px" width="8" height="10" viewBox="0 0 8 10"><path d="M1 1L5.500 5.300L1 9.600" fill="none" stroke="#a8a8a8" stroke-width="1.200"/></svg><svg style="left:80px;top:97px" width="16" height="16" viewBox="0 0 16 16"><path d="M1.500 13v-8.500q0-1 1-1h4l1.500 1.500h4.500q1 0 1 1v1.500" fill="#fcf0cc" stroke="#d6a04e" stroke-width="1"/><path d="M1.500 13.500l2.700-6h11.300l-2.700 6z" fill="#f9de9c" stroke="#d6a04e" stroke-width="1" stroke-linejoin="round"/><path d="M4.800 8.500h9.500" stroke="#fdf3d8" stroke-width="1"/></svg><span id="t18" class="t" style="left:101px;top:98px;font-size:15.5px;color:#000;font-weight:normal;font-family:'Liberation Sans',sans-serif;letter-spacing:0.328px;">lib</span><svg style="left:66px;top:124px" width="8" height="10" viewBox="0 0 8 10"><path d="M1 1L5.500 5.300L1 9.600" fill="none" stroke="#a8a8a8" stroke-width="1.200"/></svg><svg style="left:80px;top:120px" width="16" height="16" viewBox="0 0 16 16"><path d="M1.500 13v-8.500q0-1 1-1h4l1.500 1.500h4.500q1 0 1 1v1.500" fill="#fcf0cc" stroke="#d6a04e" stroke-width="1"/><path d="M1.500 13.500l2.700-6h11.300l-2.700 6z" fill="#f9de9c" stroke="#d6a04e" stroke-width="1" stroke-linejoin="round"/><path d="M4.800 8.500h9.500" stroke="#fdf3d8" stroke-width="1"/></svg><span id="t19" class="t" style="left:101px;top:121px;font-size:15.5px;color:#000;font-weight:normal;font-family:'Liberation Sans',sans-serif;letter-spacing:-0.402px;">tags</span><svg style="left:64px;top:149px" width="10" height="7" viewBox="0 0 10 7"><path d="M.600 1L5 5.400L9.400 1" fill="none" stroke="#3c3c3c" stroke-width="1.500"/></svg><svg style="left:80px;top:143px" width="16" height="16" viewBox="0 0 16 16"><path d="M1.500 13v-8.500q0-1 1-1h4l1.500 1.500h4.500q1 0 1 1v1.500" fill="#fcf0cc" stroke="#d6a04e" stroke-width="1"/><path d="M1.500 13.500l2.700-6h11.300l-2.700 6z" fill="#f9de9c" stroke="#d6a04e" stroke-width="1" stroke-linejoin="round"/><path d="M4.800 8.500h9.500" stroke="#fdf3d8" stroke-width="1"/><path d="M3.500 7.400l3.600 7.500h-7.200z" fill="#ffdf6e" stroke="#dc9a34" stroke-width=".9" stroke-linejoin="round"/><path d="M3.500 9.900v2.400" stroke="#1a1200" stroke-width="1.100"/><rect x="2.950" y="12.900" width="1.100" height="1.100" fill="#1a1200"/></svg><span id="t20" class="t" style="left:101px;top:144px;font-size:15.5px;color:#000;font-weight:normal;font-family:'Liberation Sans',sans-serif;letter-spacing:-0.614px;">views</span><svg style="left:85px;top:170px" width="8" height="10" viewBox="0 0 8 10"><path d="M1 1L5.500 5.300L1 9.600" fill="none" stroke="#a8a8a8" stroke-width="1.200"/></svg><svg style="left:99px;top:166px" width="16" height="16" viewBox="0 0 16 16"><path d="M1.500 13v-8.500q0-1 1-1h4l1.500 1.500h4.500q1 0 1 1v1.500" fill="#fcf0cc" stroke="#d6a04e" stroke-width="1"/><path d="M1.500 13.500l2.700-6h11.300l-2.700 6z" fill="#f9de9c" stroke="#d6a04e" stroke-width="1" stroke-linejoin="round"/><path d="M4.800 8.500h9.500" stroke="#fdf3d8" stroke-width="1"/><path d="M3.500 7.400l3.600 7.500h-7.200z" fill="#ffdf6e" stroke="#dc9a34" stroke-width=".9" stroke-linejoin="round"/><path d="M3.500 9.900v2.400" stroke="#1a1200" stroke-width="1.100"/><rect x="2.950" y="12.900" width="1.100" height="1.100" fill="#1a1200"/></svg><span id="t21" class="t" style="left:120px;top:167px;font-size:15.5px;color:#000;font-weight:normal;font-family:'Liberation Sans',sans-serif;letter-spacing:-0.391px;">ContratosDeCompra</span><svg style="left:85px;top:193px" width="8" height="10" viewBox="0 0 8 10"><path d="M1 1L5.500 5.300L1 9.600" fill="none" stroke="#a8a8a8" stroke-width="1.200"/></svg><svg style="left:99px;top:189px" width="16" height="16" viewBox="0 0 16 16"><path d="M1.500 13v-8.500q0-1 1-1h4l1.500 1.500h4.500q1 0 1 1v1.500" fill="#fcf0cc" stroke="#d6a04e" stroke-width="1"/><path d="M1.500 13.500l2.700-6h11.300l-2.700 6z" fill="#f9de9c" stroke="#d6a04e" stroke-width="1" stroke-linejoin="round"/><path d="M4.800 8.500h9.500" stroke="#fdf3d8" stroke-width="1"/><path d="M3.500 7.400l3.600 7.500h-7.200z" fill="#ffdf6e" stroke="#dc9a34" stroke-width=".9" stroke-linejoin="round"/><path d="M3.500 9.900v2.400" stroke="#1a1200" stroke-width="1.100"/><rect x="2.950" y="12.900" width="1.100" height="1.100" fill="#1a1200"/></svg><span id="t22" class="t" style="left:120px;top:190px;font-size:15.5px;color:#000;font-weight:normal;font-family:'Liberation Sans',sans-serif;letter-spacing:-0.468px;">ContratosDeVenda</span><svg style="left:83px;top:218px" width="10" height="7" viewBox="0 0 10 7"><path d="M.600 1L5 5.400L9.400 1" fill="none" stroke="#3c3c3c" stroke-width="1.500"/></svg><svg style="left:99px;top:212px" width="16" height="16" viewBox="0 0 16 16"><path d="M1.500 13v-8.500q0-1 1-1h4l1.500 1.500h4.500q1 0 1 1v1.500" fill="#fcf0cc" stroke="#d6a04e" stroke-width="1"/><path d="M1.500 13.500l2.700-6h11.300l-2.700 6z" fill="#f9de9c" stroke="#d6a04e" stroke-width="1" stroke-linejoin="round"/><path d="M4.800 8.500h9.500" stroke="#fdf3d8" stroke-width="1"/><path d="M3.500 7.400l3.600 7.500h-7.200z" fill="#ffdf6e" stroke="#dc9a34" stroke-width=".9" stroke-linejoin="round"/><path d="M3.500 9.900v2.400" stroke="#1a1200" stroke-width="1.100"/><rect x="2.950" y="12.900" width="1.100" height="1.100" fill="#1a1200"/></svg><span id="t23" class="t" style="left:120px;top:213px;font-size:15.5px;color:#000;font-weight:normal;font-family:'Liberation Sans',sans-serif;letter-spacing:-0.457px;">Planilha</span><svg style="left:118px;top:235px" width="16" height="16" viewBox="0 0 16 16"><path d="M3.500 1.500h7l3 3v10h-10z" fill="#fdfdf8" stroke="#927a44" stroke-width="1"/><path d="M10.500 1.500v3h3z" fill="#e8dcae" stroke="#927a44" stroke-width=".8" stroke-linejoin="round"/><path d="M3.500 14.500h10" stroke="#7a6434" stroke-width="1"/><path d="M5.500 5.500h3.500" stroke="#e23a3a" stroke-width="1"/><path d="M5.500 7.500h2.500M9.500 7.500h1" stroke="#3f66b8" stroke-width="1"/><path d="M5.500 9.500h1" stroke="#e23a3a" stroke-width="1"/><path d="M7.500 9.500h3.500" stroke="#2f4f9a" stroke-width="1"/><path d="M5.500 11.500h5.500" stroke="#3fa052" stroke-width="1"/><path d="M3.500 7.400l3.600 7.500h-7.200z" fill="#ffdf6e" stroke="#dc9a34" stroke-width=".9" stroke-linejoin="round"/><path d="M3.500 9.900v2.400" stroke="#1a1200" stroke-width="1.100"/><rect x="2.950" y="12.900" width="1.100" height="1.100" fill="#1a1200"/></svg><span id="t24" class="t" style="left:139px;top:236px;font-size:15.5px;color:#000;font-weight:normal;font-family:'Liberation Sans',sans-serif;letter-spacing:-0.495px;">analise.jsp</span><svg style="left:118px;top:258px" width="16" height="16" viewBox="0 0 16 16"><path d="M3.500 1.500h7l3 3v10h-10z" fill="#fdfdf8" stroke="#927a44" stroke-width="1"/><path d="M10.500 1.500v3h3z" fill="#e8dcae" stroke="#927a44" stroke-width=".8" stroke-linejoin="round"/><path d="M3.500 14.500h10" stroke="#7a6434" stroke-width="1"/><path d="M5.500 5.500h3.500" stroke="#e23a3a" stroke-width="1"/><path d="M5.500 7.500h2.500M9.500 7.500h1" stroke="#3f66b8" stroke-width="1"/><path d="M5.500 9.500h1" stroke="#e23a3a" stroke-width="1"/><path d="M7.500 9.500h3.500" stroke="#2f4f9a" stroke-width="1"/><path d="M5.500 11.500h5.500" stroke="#3fa052" stroke-width="1"/><path d="M3.500 7.400l3.600 7.500h-7.200z" fill="#ffdf6e" stroke="#dc9a34" stroke-width=".9" stroke-linejoin="round"/><path d="M3.500 9.900v2.400" stroke="#1a1200" stroke-width="1.100"/><rect x="2.950" y="12.900" width="1.100" height="1.100" fill="#1a1200"/></svg><span id="t25" class="t" style="left:139px;top:259px;font-size:15.5px;color:#000;font-weight:normal;font-family:'Liberation Sans',sans-serif;letter-spacing:-0.445px;">datasCompra.jsp</span><svg style="left:118px;top:281px" width="16" height="16" viewBox="0 0 16 16"><path d="M3.500 1.500h7l3 3v10h-10z" fill="#fdfdf8" stroke="#927a44" stroke-width="1"/><path d="M10.500 1.500v3h3z" fill="#e8dcae" stroke="#927a44" stroke-width=".8" stroke-linejoin="round"/><path d="M3.500 14.500h10" stroke="#7a6434" stroke-width="1"/><path d="M5.500 5.500h3.500" stroke="#e23a3a" stroke-width="1"/><path d="M5.500 7.500h2.500M9.500 7.500h1" stroke="#3f66b8" stroke-width="1"/><path d="M5.500 9.500h1" stroke="#e23a3a" stroke-width="1"/><path d="M7.500 9.500h3.500" stroke="#2f4f9a" stroke-width="1"/><path d="M5.500 11.500h5.500" stroke="#3fa052" stroke-width="1"/></svg><span id="t26" class="t" style="left:139px;top:282px;font-size:15.5px;color:#000;font-weight:normal;font-family:'Liberation Sans',sans-serif;letter-spacing:-0.431px;">novo.jsp</span><svg style="left:118px;top:304px" width="16" height="16" viewBox="0 0 16 16"><path d="M3.500 1.500h7l3 3v10h-10z" fill="#fdfdf8" stroke="#927a44" stroke-width="1"/><path d="M10.500 1.500v3h3z" fill="#e8dcae" stroke="#927a44" stroke-width=".8" stroke-linejoin="round"/><path d="M3.500 14.500h10" stroke="#7a6434" stroke-width="1"/><path d="M5.500 5.500h3.500" stroke="#e23a3a" stroke-width="1"/><path d="M5.500 7.500h2.500M9.500 7.500h1" stroke="#3f66b8" stroke-width="1"/><path d="M5.500 9.500h1" stroke="#e23a3a" stroke-width="1"/><path d="M7.500 9.500h3.500" stroke="#2f4f9a" stroke-width="1"/><path d="M5.500 11.500h5.500" stroke="#3fa052" stroke-width="1"/><path d="M3.500 7.400l3.600 7.500h-7.200z" fill="#ffdf6e" stroke="#dc9a34" stroke-width=".9" stroke-linejoin="round"/><path d="M3.500 9.900v2.400" stroke="#1a1200" stroke-width="1.100"/><rect x="2.950" y="12.900" width="1.100" height="1.100" fill="#1a1200"/></svg><span id="t27" class="t" style="left:139px;top:305px;font-size:15.5px;color:#000;font-weight:normal;font-family:'Liberation Sans',sans-serif;letter-spacing:-0.299px;">parametrosDeCompra_substituido.jsp</span><svg style="left:118px;top:327px" width="16" height="16" viewBox="0 0 16 16"><path d="M3.500 1.500h7l3 3v10h-10z" fill="#fdfdf8" stroke="#927a44" stroke-width="1"/><path d="M10.500 1.500v3h3z" fill="#e8dcae" stroke="#927a44" stroke-width=".8" stroke-linejoin="round"/><path d="M3.500 14.500h10" stroke="#7a6434" stroke-width="1"/><path d="M5.500 5.500h3.500" stroke="#e23a3a" stroke-width="1"/><path d="M5.500 7.500h2.500M9.500 7.500h1" stroke="#3f66b8" stroke-width="1"/><path d="M5.500 9.500h1" stroke="#e23a3a" stroke-width="1"/><path d="M7.500 9.500h3.500" stroke="#2f4f9a" stroke-width="1"/><path d="M5.500 11.500h5.500" stroke="#3fa052" stroke-width="1"/><path d="M3.500 7.400l3.600 7.500h-7.200z" fill="#ffdf6e" stroke="#dc9a34" stroke-width=".9" stroke-linejoin="round"/><path d="M3.500 9.900v2.400" stroke="#1a1200" stroke-width="1.100"/><rect x="2.950" y="12.900" width="1.100" height="1.100" fill="#1a1200"/></svg><span id="t28" class="t" style="left:139px;top:328px;font-size:15.5px;color:#000;font-weight:normal;font-family:'Liberation Sans',sans-serif;letter-spacing:-0.358px;">parametrosDeCompra.jsp</span><svg style="left:83px;top:356px" width="10" height="7" viewBox="0 0 10 7"><path d="M.600 1L5 5.400L9.400 1" fill="none" stroke="#3c3c3c" stroke-width="1.500"/></svg><svg style="left:99px;top:350px" width="16" height="16" viewBox="0 0 16 16"><path d="M1.500 13v-8.500q0-1 1-1h4l1.500 1.500h4.500q1 0 1 1v1.500" fill="#fcf0cc" stroke="#d6a04e" stroke-width="1"/><path d="M1.500 13.500l2.700-6h11.300l-2.700 6z" fill="#f9de9c" stroke="#d6a04e" stroke-width="1" stroke-linejoin="round"/><path d="M4.800 8.500h9.500" stroke="#fdf3d8" stroke-width="1"/><path d="M3.500 7.400l3.600 7.500h-7.200z" fill="#ffdf6e" stroke="#dc9a34" stroke-width=".9" stroke-linejoin="round"/><path d="M3.500 9.900v2.400" stroke="#1a1200" stroke-width="1.100"/><rect x="2.950" y="12.900" width="1.100" height="1.100" fill="#1a1200"/></svg><span id="t29" class="t" style="left:120px;top:351px;font-size:15.5px;color:#000;font-weight:normal;font-family:'Liberation Sans',sans-serif;letter-spacing:-0.075px;">relatorios</span><svg style="left:118px;top:373px" width="16" height="16" viewBox="0 0 16 16"><path d="M3.500 1.500h7l3 3v10h-10z" fill="#fdfdf8" stroke="#927a44" stroke-width="1"/><path d="M10.500 1.500v3h3z" fill="#e8dcae" stroke="#927a44" stroke-width=".8" stroke-linejoin="round"/><path d="M3.500 14.500h10" stroke="#7a6434" stroke-width="1"/><path d="M5.500 5.500h3.500" stroke="#e23a3a" stroke-width="1"/><path d="M5.500 7.500h2.500M9.500 7.500h1" stroke="#3f66b8" stroke-width="1"/><path d="M5.500 9.500h1" stroke="#e23a3a" stroke-width="1"/><path d="M7.500 9.500h3.500" stroke="#2f4f9a" stroke-width="1"/><path d="M5.500 11.500h5.500" stroke="#3fa052" stroke-width="1"/><path d="M3.500 7.400l3.600 7.500h-7.200z" fill="#ffdf6e" stroke="#dc9a34" stroke-width=".9" stroke-linejoin="round"/><path d="M3.500 9.900v2.400" stroke="#1a1200" stroke-width="1.100"/><rect x="2.950" y="12.900" width="1.100" height="1.100" fill="#1a1200"/></svg><span id="t30" class="t" style="left:139px;top:374px;font-size:15.5px;color:#000;font-weight:normal;font-family:'Liberation Sans',sans-serif;letter-spacing:-0.112px;">lista-contratos-de-compra.jsp</span><svg style="left:118px;top:396px" width="16" height="16" viewBox="0 0 16 16"><path d="M3.500 1.500h7l3 3v10h-10z" fill="#fdfdf8" stroke="#927a44" stroke-width="1"/><path d="M10.500 1.500v3h3z" fill="#e8dcae" stroke="#927a44" stroke-width=".8" stroke-linejoin="round"/><path d="M3.500 14.500h10" stroke="#7a6434" stroke-width="1"/><path d="M5.500 5.500h3.500" stroke="#e23a3a" stroke-width="1"/><path d="M5.500 7.500h2.500M9.500 7.500h1" stroke="#3f66b8" stroke-width="1"/><path d="M5.500 9.500h1" stroke="#e23a3a" stroke-width="1"/><path d="M7.500 9.500h3.500" stroke="#2f4f9a" stroke-width="1"/><path d="M5.500 11.500h5.500" stroke="#3fa052" stroke-width="1"/><path d="M3.500 7.400l3.600 7.500h-7.200z" fill="#ffdf6e" stroke="#dc9a34" stroke-width=".9" stroke-linejoin="round"/><path d="M3.500 9.900v2.400" stroke="#1a1200" stroke-width="1.100"/><rect x="2.950" y="12.900" width="1.100" height="1.100" fill="#1a1200"/></svg><span id="t31" class="t" style="left:139px;top:397px;font-size:15.5px;color:#000;font-weight:normal;font-family:'Liberation Sans',sans-serif;letter-spacing:-0.168px;">lista-contratos-de-venda.jsp</span><svg style="left:118px;top:419px" width="16" height="16" viewBox="0 0 16 16"><path d="M3.500 1.500h7l3 3v10h-10z" fill="#fdfdf8" stroke="#927a44" stroke-width="1"/><path d="M10.500 1.500v3h3z" fill="#e8dcae" stroke="#927a44" stroke-width=".8" stroke-linejoin="round"/><path d="M3.500 14.500h10" stroke="#7a6434" stroke-width="1"/><path d="M5.500 5.500h3.500" stroke="#e23a3a" stroke-width="1"/><path d="M5.500 7.500h2.500M9.500 7.500h1" stroke="#3f66b8" stroke-width="1"/><path d="M5.500 9.500h1" stroke="#e23a3a" stroke-width="1"/><path d="M7.500 9.500h3.500" stroke="#2f4f9a" stroke-width="1"/><path d="M5.500 11.500h5.500" stroke="#3fa052" stroke-width="1"/><path d="M3.500 7.400l3.600 7.500h-7.200z" fill="#ffdf6e" stroke="#dc9a34" stroke-width=".9" stroke-linejoin="round"/><path d="M3.500 9.900v2.400" stroke="#1a1200" stroke-width="1.100"/><rect x="2.950" y="12.900" width="1.100" height="1.100" fill="#1a1200"/></svg><span id="t32" class="t" style="left:139px;top:420px;font-size:15.5px;color:#000;font-weight:normal;font-family:'Liberation Sans',sans-serif;letter-spacing:-0.358px;">parametrosDeCompra.jsp</span><svg style="left:118px;top:442px" width="16" height="16" viewBox="0 0 16 16"><path d="M3.500 1.500h7l3 3v10h-10z" fill="#fdfdf8" stroke="#927a44" stroke-width="1"/><path d="M10.500 1.500v3h3z" fill="#e8dcae" stroke="#927a44" stroke-width=".8" stroke-linejoin="round"/><path d="M3.500 14.500h10" stroke="#7a6434" stroke-width="1"/><path d="M5.500 5.500h3.500" stroke="#e23a3a" stroke-width="1"/><path d="M5.500 7.500h2.500M9.500 7.500h1" stroke="#3f66b8" stroke-width="1"/><path d="M5.500 9.500h1" stroke="#e23a3a" stroke-width="1"/><path d="M7.500 9.500h3.500" stroke="#2f4f9a" stroke-width="1"/><path d="M5.500 11.500h5.500" stroke="#3fa052" stroke-width="1"/><path d="M3.500 7.400l3.600 7.500h-7.200z" fill="#ffdf6e" stroke="#dc9a34" stroke-width=".9" stroke-linejoin="round"/><path d="M3.500 9.900v2.400" stroke="#1a1200" stroke-width="1.100"/><rect x="2.950" y="12.900" width="1.100" height="1.100" fill="#1a1200"/></svg><span id="t33" class="t" style="left:139px;top:443px;font-size:15.5px;color:#000;font-weight:normal;font-family:'Liberation Sans',sans-serif;letter-spacing:-0.227px;">relatorios.jsp</span><svg style="left:99px;top:465px" width="16" height="16" viewBox="0 0 16 16"><path d="M3.500 1.500h7l3 3v10h-10z" fill="#fdfdf8" stroke="#927a44" stroke-width="1"/><path d="M10.500 1.500v3h3z" fill="#e8dcae" stroke="#927a44" stroke-width=".8" stroke-linejoin="round"/><path d="M3.500 14.500h10" stroke="#7a6434" stroke-width="1"/><path d="M5.500 5.500h3.500" stroke="#e23a3a" stroke-width="1"/><path d="M5.500 7.500h2.500M9.500 7.500h1" stroke="#3f66b8" stroke-width="1"/><path d="M5.500 9.500h1" stroke="#e23a3a" stroke-width="1"/><path d="M7.500 9.500h3.500" stroke="#2f4f9a" stroke-width="1"/><path d="M5.500 11.500h5.500" stroke="#3fa052" stroke-width="1"/><path d="M3.500 7.400l3.600 7.500h-7.200z" fill="#ffdf6e" stroke="#dc9a34" stroke-width=".9" stroke-linejoin="round"/><path d="M3.500 9.900v2.400" stroke="#1a1200" stroke-width="1.100"/><rect x="2.950" y="12.900" width="1.100" height="1.100" fill="#1a1200"/></svg><span id="t34" class="t" style="left:120px;top:466px;font-size:15.5px;color:#000;font-weight:normal;font-family:'Liberation Sans',sans-serif;letter-spacing:-0.410px;">index.jsp</span><svg style="left:99px;top:488px" width="16" height="16" viewBox="0 0 16 16"><path d="M3.500 1.500h7l3 3v10h-10z" fill="#fdfdf8" stroke="#927a44" stroke-width="1"/><path d="M10.500 1.500v3h3z" fill="#e8dcae" stroke="#927a44" stroke-width=".8" stroke-linejoin="round"/><path d="M3.500 14.500h10" stroke="#7a6434" stroke-width="1"/><path d="M5.500 5.500h3.500" stroke="#e23a3a" stroke-width="1"/><path d="M5.500 7.500h2.500M9.500 7.500h1" stroke="#3f66b8" stroke-width="1"/><path d="M5.500 9.500h1" stroke="#e23a3a" stroke-width="1"/><path d="M7.500 9.500h3.500" stroke="#2f4f9a" stroke-width="1"/><path d="M5.500 11.500h5.500" stroke="#3fa052" stroke-width="1"/><path d="M3.500 7.400l3.600 7.500h-7.200z" fill="#ffdf6e" stroke="#dc9a34" stroke-width=".9" stroke-linejoin="round"/><path d="M3.500 9.900v2.400" stroke="#1a1200" stroke-width="1.100"/><rect x="2.950" y="12.900" width="1.100" height="1.100" fill="#1a1200"/></svg><span id="t35" class="t" style="left:120px;top:489px;font-size:15.5px;color:#000;font-weight:normal;font-family:'Liberation Sans',sans-serif;letter-spacing:-0.460px;">index2.jsp</span><svg style="left:99px;top:511px" width="16" height="16" viewBox="0 0 16 16"><path d="M3.500 1.500h7l3 3v10h-10z" fill="#fdfdf8" stroke="#927a44" stroke-width="1"/><path d="M10.500 1.500v3h3z" fill="#e8dcae" stroke="#927a44" stroke-width=".8" stroke-linejoin="round"/><path d="M3.500 14.500h10" stroke="#7a6434" stroke-width="1"/><path d="M5.500 5.500h3.500" stroke="#e23a3a" stroke-width="1"/><path d="M5.500 7.500h2.500M9.500 7.500h1" stroke="#3f66b8" stroke-width="1"/><path d="M5.500 9.500h1" stroke="#e23a3a" stroke-width="1"/><path d="M7.500 9.500h3.500" stroke="#2f4f9a" stroke-width="1"/><path d="M5.500 11.500h5.500" stroke="#3fa052" stroke-width="1"/></svg><span id="t36" class="t" style="left:120px;top:512px;font-size:15.5px;color:#000;font-weight:normal;font-family:'Liberation Sans',sans-serif;letter-spacing:-0.153px;">login.jsp</span><svg style="left:80px;top:534px" width="16" height="16" viewBox="0 0 16 16"><path d="M3.500 1.500h7l3 3v10h-10z" fill="#f3f6fc" stroke="#8f9bb8" stroke-width="1"/><path d="M3.500 14.500v-13h7" fill="none" stroke="#b4a67a" stroke-width="1"/><path d="M10.500 1.500v3h3z" fill="#eadfae" stroke="#b4a67a" stroke-width=".8" stroke-linejoin="round"/><path d="M6 6l4.500 6.500M10.500 6l-4.500 6.500" stroke="#2c3c5e" stroke-width="1.700"/></svg><span id="t37" class="t" style="left:101px;top:535px;font-size:15.5px;color:#000;font-weight:normal;font-family:'Liberation Sans',sans-serif;letter-spacing:-0.187px;">spring-context.xml</span><svg style="left:80px;top:557px" width="16" height="16" viewBox="0 0 16 16"><path d="M3.500 1.500h7l3 3v10h-10z" fill="#f3f6fc" stroke="#8f9bb8" stroke-width="1"/><path d="M3.500 14.500v-13h7" fill="none" stroke="#b4a67a" stroke-width="1"/><path d="M10.500 1.500v3h3z" fill="#eadfae" stroke="#b4a67a" stroke-width=".8" stroke-linejoin="round"/><path d="M6 6l4.500 6.500M10.500 6l-4.500 6.500" stroke="#2c3c5e" stroke-width="1.700"/></svg><span id="t38" class="t" style="left:101px;top:558px;font-size:15.5px;color:#000;font-weight:normal;font-family:'Liberation Sans',sans-serif;letter-spacing:-0.350px;">web.xml</span><svg style="left:61px;top:580px" width="16" height="16" viewBox="0 0 16 16"><path d="M3.500 1.500h7l3 3v10h-10z" fill="#fdfdf8" stroke="#927a44" stroke-width="1"/><path d="M10.500 1.500v3h3z" fill="#e8dcae" stroke="#927a44" stroke-width=".8" stroke-linejoin="round"/><path d="M3.500 14.500h10" stroke="#7a6434" stroke-width="1"/><path d="M5.500 5.500h3.500" stroke="#e23a3a" stroke-width="1"/><path d="M5.500 7.500h2.500M9.500 7.500h1" stroke="#3f66b8" stroke-width="1"/><path d="M5.500 9.500h1" stroke="#e23a3a" stroke-width="1"/><path d="M7.500 9.500h3.500" stroke="#2f4f9a" stroke-width="1"/><path d="M5.500 11.500h5.500" stroke="#3fa052" stroke-width="1"/><path d="M3.500 7.400l3.600 7.500h-7.200z" fill="#ffdf6e" stroke="#dc9a34" stroke-width=".9" stroke-linejoin="round"/><path d="M3.500 9.900v2.400" stroke="#1a1200" stroke-width="1.100"/><rect x="2.950" y="12.900" width="1.100" height="1.100" fill="#1a1200"/></svg><span id="t39" class="t" style="left:82px;top:581px;font-size:15.5px;color:#000;font-weight:normal;font-family:'Liberation Sans',sans-serif;letter-spacing:-0.410px;">index.jsp</span><svg style="left:61px;top:603px" width="16" height="16" viewBox="0 0 16 16"><path d="M3.500 1.500h7l3 3v10h-10z" fill="#fdfdf8" stroke="#927a44" stroke-width="1"/><path d="M10.500 1.500v3h3z" fill="#e8dcae" stroke="#927a44" stroke-width=".8" stroke-linejoin="round"/><path d="M3.500 14.500h10" stroke="#7a6434" stroke-width="1"/><path d="M5.500 5.500h3.500" stroke="#e23a3a" stroke-width="1"/><path d="M5.500 7.500h2.500M9.500 7.500h1" stroke="#3f66b8" stroke-width="1"/><path d="M5.500 9.500h1" stroke="#e23a3a" stroke-width="1"/><path d="M7.500 9.500h3.500" stroke="#2f4f9a" stroke-width="1"/><path d="M5.500 11.500h5.500" stroke="#3fa052" stroke-width="1"/><path d="M3.500 7.400l3.600 7.500h-7.200z" fill="#ffdf6e" stroke="#dc9a34" stroke-width=".9" stroke-linejoin="round"/><path d="M3.500 9.900v2.400" stroke="#1a1200" stroke-width="1.100"/><rect x="2.950" y="12.900" width="1.100" height="1.100" fill="#1a1200"/></svg><span id="t40" class="t" style="left:82px;top:604px;font-size:15.5px;color:#000;font-weight:normal;font-family:'Liberation Sans',sans-serif;letter-spacing:-0.430px;">index2.jsp</span><svg style="left:61px;top:626px" width="16" height="16" viewBox="0 0 16 16"><path d="M3.500 1.500h7l3 3v10h-10z" fill="#f6f8fd" stroke="#8f9bb8" stroke-width="1"/><path d="M10.500 1.500v3h3z" fill="#dfe6f4" stroke="#8f9bb8" stroke-width=".8" stroke-linejoin="round"/><path d="M5.500 5.500h3.500M5.500 7.500h5.500M5.500 9.500h5.500M5.500 11.500h5.500" stroke="#6f8fd0" stroke-width="1"/></svg><span id="t41" class="t" style="left:82px;top:627px;font-size:15.5px;color:#000;font-weight:normal;font-family:'Liberation Sans',sans-serif;letter-spacing:-1.649px;">LICENSE</span><svg style="left:61px;top:649px" width="16" height="16" viewBox="0 0 16 16"><path d="M3.500 1.500h7l3 3v10h-10z" fill="#fdfdf8" stroke="#927a44" stroke-width="1"/><path d="M10.500 1.500v3h3z" fill="#e8dcae" stroke="#927a44" stroke-width=".8" stroke-linejoin="round"/><rect x="5" y="6.500" width="7" height="6" fill="#e4ecfa" stroke="#9fb4dc" stroke-width=".6"/><path d="M6 8l1 3.300 1.400-3 1.400 3 1-3.300" stroke="#2a4a8a" stroke-width="1" fill="none"/></svg><span id="t42" class="t" style="left:82px;top:650px;font-size:15.5px;color:#000;font-weight:normal;font-family:'Liberation Sans',sans-serif;letter-spacing:-0.995px;">README.md</span><svg style="left:61px;top:672px" width="16" height="16" viewBox="0 0 16 16"><path d="M3.500 1.500h7l3 3v10h-10z" fill="#fdfdf8" stroke="#927a44" stroke-width="1"/><path d="M10.500 1.500v3h3z" fill="#e8dcae" stroke="#927a44" stroke-width=".8" stroke-linejoin="round"/><path d="M3.500 14.500h10" stroke="#7a6434" stroke-width="1"/><path d="M5.500 5.500h3.500" stroke="#e23a3a" stroke-width="1"/><path d="M5.500 7.500h2.500M9.500 7.500h1" stroke="#3f66b8" stroke-width="1"/><path d="M5.500 9.500h1" stroke="#e23a3a" stroke-width="1"/><path d="M7.500 9.500h3.500" stroke="#2f4f9a" stroke-width="1"/><path d="M5.500 11.500h5.500" stroke="#3fa052" stroke-width="1"/><path d="M3.500 7.400l3.600 7.500h-7.200z" fill="#ffdf6e" stroke="#dc9a34" stroke-width=".9" stroke-linejoin="round"/><path d="M3.500 9.900v2.400" stroke="#1a1200" stroke-width="1.100"/><rect x="2.950" y="12.900" width="1.100" height="1.100" fill="#1a1200"/></svg><span id="t43" class="t" style="left:82px;top:673px;font-size:15.5px;color:#000;font-weight:normal;font-family:'Liberation Sans',sans-serif;letter-spacing:-0.458px;">teste.jsp</span><svg style="left:61px;top:695px" width="16" height="16" viewBox="0 0 16 16"><path d="M3.500 1.500h7l3 3v10h-10z" fill="#fdfdf8" stroke="#927a44" stroke-width="1"/><path d="M10.500 1.500v3h3z" fill="#e8dcae" stroke="#927a44" stroke-width=".8" stroke-linejoin="round"/><path d="M3.500 14.500h10" stroke="#7a6434" stroke-width="1"/><path d="M5.500 5.500h3.500" stroke="#e23a3a" stroke-width="1"/><path d="M5.500 7.500h2.500M9.500 7.500h1" stroke="#3f66b8" stroke-width="1"/><path d="M5.500 9.500h1" stroke="#e23a3a" stroke-width="1"/><path d="M7.500 9.500h3.500" stroke="#2f4f9a" stroke-width="1"/><path d="M5.500 11.500h5.500" stroke="#3fa052" stroke-width="1"/></svg><span id="t44" class="t" style="left:82px;top:696px;font-size:15.5px;color:#000;font-weight:normal;font-family:'Liberation Sans',sans-serif;letter-spacing:-0.329px;">teste2.html</span><svg style="left:42px;top:718px" width="16" height="16" viewBox="0 0 16 16"><path d="M3.500 1.500h7l3 3v10h-10z" fill="#f6f8fd" stroke="#8f9bb8" stroke-width="1"/><path d="M10.500 1.500v3h3z" fill="#dfe6f4" stroke="#8f9bb8" stroke-width=".8" stroke-linejoin="round"/><path d="M5.500 5.500h3.500M5.500 7.500h5.500M5.500 9.500h5.500M5.500 11.500h5.500" stroke="#6f8fd0" stroke-width="1"/></svg><span id="t45" class="t" style="left:63px;top:719px;font-size:15.5px;color:#000;font-weight:normal;font-family:'Liberation Sans',sans-serif;letter-spacing:-1.692px;">LICENSE</span><svg style="left:42px;top:741px" width="16" height="16" viewBox="0 0 16 16"><path d="M3.500 1.500h7l3 3v10h-10z" fill="#fdfdf8" stroke="#927a44" stroke-width="1"/><path d="M10.500 1.500v3h3z" fill="#e8dcae" stroke="#927a44" stroke-width=".8" stroke-linejoin="round"/><rect x="5" y="6.500" width="7" height="6" fill="#e4ecfa" stroke="#9fb4dc" stroke-width=".6"/><path d="M6 8l1 3.300 1.400-3 1.400 3 1-3.300" stroke="#2a4a8a" stroke-width="1" fill="none"/></svg><span id="t46" class="t" style="left:63px;top:742px;font-size:15.5px;color:#000;font-weight:normal;font-family:'Liberation Sans',sans-serif;letter-spacing:-0.984px;">README.md</span><svg style="left:9px;top:768px" width="8" height="10" viewBox="0 0 8 10"><path d="M1 1L5.500 5.300L1 9.600" fill="none" stroke="#a8a8a8" stroke-width="1.200"/></svg><svg style="left:22px;top:763px" width="18" height="18" viewBox="0 0 18 18"><defs><linearGradient id="pf" x1="0" y1="0" x2="0" y2="1"><stop offset="0" stop-color="#c6daf5"/><stop offset="1" stop-color="#6e9ae0"/></linearGradient></defs><path d="M2.500 12v-8.500q0-1 1-1h3.500l1.500 1.500h5q1 0 1 1v2" fill="#fbf2d2" stroke="#c8a458" stroke-width="1"/><path d="M2.300 12.500l2.700-5.500h11.500l-2.700 5.500z" fill="url(#pf)" stroke="#3d60c0" stroke-width="1" stroke-linejoin="round"/><path d="M15.500 .500v4.200c0 1.500-.8 2-2.200 2" stroke="#3f6fc0" stroke-width="1.400" fill="none"/><path d="M13.300 .700h3" stroke="#3f6fc0" stroke-width="1.200"/><circle cx="5" cy="3.300" r="3.200" fill="#5fa4e0" stroke="#2f5f9e" stroke-width=".7"/><path d="M3 2.300c1 .5 1.500 2 1 3.500M5.500 .600c.5 1 1.800 1.200 2.300 2.200" stroke="#3f9a52" stroke-width="1.200" fill="none"/><g transform="translate(1,.7)"><path d="M3.500 7.400l3.600 7.500h-7.200z" fill="#ffdf6e" stroke="#dc9a34" stroke-width=".9" stroke-linejoin="round"/><path d="M3.500 9.900v2.400" stroke="#1a1200" stroke-width="1.100"/><rect x="2.950" y="12.900" width="1.100" height="1.100" fill="#1a1200"/></g></svg><span id="t47" class="t" style="left:44px;top:765px;font-size:15.5px;color:#000;font-weight:normal;font-family:'Liberation Sans',sans-serif;letter-spacing:-0.155px;">NovoProjeto</span><svg style="left:9px;top:791px" width="8" height="10" viewBox="0 0 8 10"><path d="M1 1L5.500 5.300L1 9.600" fill="none" stroke="#a8a8a8" stroke-width="1.200"/></svg><svg style="left:22px;top:786px" width="18" height="18" viewBox="0 0 18 18"><defs><linearGradient id="pf" x1="0" y1="0" x2="0" y2="1"><stop offset="0" stop-color="#c6daf5"/><stop offset="1" stop-color="#6e9ae0"/></linearGradient></defs><path d="M2.500 12v-8.500q0-1 1-1h3.500l1.500 1.500h5q1 0 1 1v2" fill="#fbf2d2" stroke="#c8a458" stroke-width="1"/><path d="M2.300 12.500l2.700-5.500h11.500l-2.700 5.500z" fill="url(#pf)" stroke="#3d60c0" stroke-width="1" stroke-linejoin="round"/><path d="M15.500 .500v4.200c0 1.500-.8 2-2.200 2" stroke="#3f6fc0" stroke-width="1.400" fill="none"/><path d="M13.300 .700h3" stroke="#3f6fc0" stroke-width="1.200"/></svg><span id="t48" class="t" style="left:44px;top:788px;font-size:15.5px;color:#000;font-weight:normal;font-family:'Liberation Sans',sans-serif;letter-spacing:-0.868px;">renna_CereaisSul</span><svg style="left:9px;top:814px" width="8" height="10" viewBox="0 0 8 10"><path d="M1 1L5.500 5.300L1 9.600" fill="none" stroke="#a8a8a8" stroke-width="1.200"/></svg><svg style="left:22px;top:809px" width="18" height="18" viewBox="0 0 18 18"><defs><linearGradient id="pf" x1="0" y1="0" x2="0" y2="1"><stop offset="0" stop-color="#c6daf5"/><stop offset="1" stop-color="#6e9ae0"/></linearGradient></defs><path d="M2.500 12v-8.500q0-1 1-1h3.500l1.500 1.500h5q1 0 1 1v2" fill="#fbf2d2" stroke="#c8a458" stroke-width="1"/><path d="M2.300 12.500l2.700-5.500h11.500l-2.700 5.500z" fill="url(#pf)" stroke="#3d60c0" stroke-width="1" stroke-linejoin="round"/></svg><span id="t49" class="t" style="left:44px;top:811px;font-size:15.5px;color:#000;font-weight:normal;font-family:'Liberation Sans',sans-serif;letter-spacing:-0.915px;">Servers</span><svg style="left:9px;top:837px" width="8" height="10" viewBox="0 0 8 10"><path d="M1 1L5.500 5.300L1 9.600" fill="none" stroke="#a8a8a8" stroke-width="1.200"/></svg><svg style="left:22px;top:832px" width="18" height="18" viewBox="0 0 18 18"><defs><linearGradient id="pf" x1="0" y1="0" x2="0" y2="1"><stop offset="0" stop-color="#c6daf5"/><stop offset="1" stop-color="#6e9ae0"/></linearGradient></defs><path d="M2.500 12v-8.500q0-1 1-1h3.500l1.500 1.500h5q1 0 1 1v2" fill="#fbf2d2" stroke="#c8a458" stroke-width="1"/><path d="M2.300 12.500l2.700-5.500h11.500l-2.700 5.500z" fill="url(#pf)" stroke="#3d60c0" stroke-width="1" stroke-linejoin="round"/><path d="M15.500 .500v4.200c0 1.500-.8 2-2.200 2" stroke="#3f6fc0" stroke-width="1.400" fill="none"/><path d="M13.300 .700h3" stroke="#3f6fc0" stroke-width="1.200"/><g transform="translate(1,.7)"><path d="M3.500 7.400l3.600 7.500h-7.200z" fill="#ffdf6e" stroke="#dc9a34" stroke-width=".9" stroke-linejoin="round"/><path d="M3.500 9.900v2.400" stroke="#1a1200" stroke-width="1.100"/><rect x="2.950" y="12.900" width="1.100" height="1.100" fill="#1a1200"/></g></svg><span id="t50" class="t" style="left:44px;top:834px;font-size:15.5px;color:#000;font-weight:normal;font-family:'Liberation Sans',sans-serif;letter-spacing:-0.612px;">Teste 2</span></div><div class="a" style="left:393px;top:93px;width:1491px;height:722px;background:#fff;border-radius:7px 7px 6px 6px;box-sizing:border-box;border:1px solid #eef1f8;"></div><div class="a" style="left:394px;top:94px;width:1489px;height:29px;background:#f4f6fb;border-radius:6px 6px 0 0;"></div><div class="a" style="left:394px;top:94px;width:197px;height:29px;background:linear-gradient(#dce4f0,#f1f5fa 45%,#ffffff 90%);border-radius:6px 6px 0 0;"></div><span id="t51" class="t" style="left:418px;top:102px;font-size:15.5px;color:#000;font-weight:normal;font-family:'Liberation Sans',sans-serif;letter-spacing:-0.315px;">PlanilhaController.java</span><svg style="left:400px;top:102px" width="14" height="15" viewBox="0 0 14 15"><path d="M1.500 .500h7l3 3v10.500h-10z" fill="#fffdf2" stroke="#9a8648" stroke-width="1"/><path d="M8.500 .500v3h3" fill="#efe3b4" stroke="#9a8648" stroke-width=".8"/><path d="M7.500 4.500v5c0 1.600-.8 2.200-2.800 2.200" stroke="#2f5fae" stroke-width="1.600" fill="none"/></svg><svg style="left:573px;top:104px" width="11" height="11" viewBox="0 0 11 11"><path d="M1 1h2.200l2.300 2.700 2.300-2.700h2.200v1.500l-2.800 3 2.800 3v1.500h-2.200l-2.300-2.700-2.300 2.700h-2.200v-1.500l2.800-3-2.800-3z" fill="#fff" stroke="#444" stroke-width=".9" stroke-linejoin="round"/></svg><svg style="left:1836px;top:101px" width="11" height="5" viewBox="0 0 11 5"><rect x=".500" y=".500" width="9" height="3" fill="#fff" stroke="#585858" stroke-width="1"/></svg><svg style="left:1859px;top:101px" width="11" height="11" viewBox="0 0 11 11"><rect x=".500" y=".500" width="9" height="9" fill="#fff" stroke="#585858" stroke-width="1"/><path d="M.500 1.500h9" stroke="#585858" stroke-width="1"/></svg><div class="a" style="left:394px;top:123px;width:1489px;height:669px;background:#fff;"></div><div class="a" style="left:396px;top:125px;width:12px;height:667px;background:#f5f5f5;"></div><div class="a" style="left:396px;top:245px;width:12px;height:420px;background:#5b9bd8;background-image:repeating-conic-gradient(#1a74d2 0 25%,#bcdcf8 0 50%);background-size:2px 2px;"></div><div class="a" style="left:435px;top:125px;width:1px;height:667px;background:#f3f3f3;"></div><div class="a" style="left:438px;top:365px;width:1409px;height:20px;background:#e8f2fe;"></div><div class="a" style="left:1848px;top:125px;width:20px;height:667px;background:#f0f0f0;"></div><div class="a" style="left:1848px;top:146px;width:19px;height:425px;background:#cdcdcd;"></div><svg style="left:1851.5px;top:129px" width="12" height="12" viewBox="-6 -6 12 12"><path d="M-4.500 2.500L0 -2L4.500 2.500" fill="none" stroke="#505050" stroke-width="2"/></svg><svg style="left:1851.5px;top:774.5px" width="12" height="12" viewBox="-6 -6 12 12"><path d="M-4.500 -2.500L0 2L4.500 -2.500" fill="none" stroke="#505050" stroke-width="2"/></svg><div class="a" style="left:1868px;top:125px;width:13px;height:687px;background:#f8f8f8;"></div><svg style="left:1871px;top:169px" width="9" height="5" viewBox="0 0 9 5"><rect x=".500" y=".500" width="8" height="4" fill="#fdfdfd" stroke="#d9d9d9"/></svg><svg style="left:1871px;top:271px" width="9" height="5" viewBox="0 0 9 5"><rect x=".500" y=".500" width="8" height="4" fill="#fdfdfd" stroke="#d9d9d9"/></svg><div class="a" style="left:436px;top:792px;width:1432px;height:20px;background:#f0f0f0;"></div><svg style="left:440px;top:795.5px" width="12" height="12" viewBox="-6 -6 12 12"><path d="M2.500 -4.500L-2 0L2.500 4.500" fill="none" stroke="#bdbdbd" stroke-width="2"/></svg><svg style="left:1830.5px;top:795.5px" width="12" height="12" viewBox="-6 -6 12 12"><path d="M-2.500 -4.500L2 0L-2.500 4.500" fill="none" stroke="#bdbdbd" stroke-width="2"/></svg><div class="a" style="left:394px;top:791px;width:42px;height:21px;background:#f8f8f8;"></div><div class="a" style="left:408px;top:125px;width:1440px;height:666px;overflow:hidden"><div class="ln" style="left:0;top:2px;width:18px">1</div><div class="code" style="left:30px;top:2px"><span class="k">package</span> br.com.cereaissul.controller;</div><div class="ln" style="left:0;top:22px;width:18px">2</div><div class="code" style="left:30px;top:22px"></div><div class="ln" style="left:0;top:42px;width:18px">3</div><div class="code" style="left:30px;top:42px"><span class="k">import</span> javax.servlet.http.HttpSession;</div><svg style="left:18px;top:45px" width="9" height="9" viewBox="0 0 9 9"><circle cx="4.500" cy="4.500" r="3.900" fill="#cfdcee" stroke="#8aa0c0" stroke-width=".9"/><path d="M2.500 4.500h4M4.500 2.500v4" stroke="#101820" stroke-width="1"/></svg><div class="ln" style="left:0;top:62px;width:18px">15</div><div class="code" style="left:30px;top:62px"></div><div class="ln" style="left:0;top:82px;width:18px">16</div><div class="code" style="left:30px;top:82px"><span class="an">@Controller</span></div><div class="ln" style="left:0;top:102px;width:18px">17</div><div class="code" style="left:30px;top:102px"><span class="k">public</span> <span class="k">class</span> PlanilhaController {</div><div class="ln" style="left:0;top:122px;width:18px">18</div><div class="code" style="left:30px;top:122px">    <span class="an">@RequestMapping</span>(<span class="s">&quot;adicionarNovoParamCompra&quot;</span>)</div><svg style="left:18px;top:125px" width="9" height="9" viewBox="0 0 9 9"><circle cx="4.500" cy="4.500" r="3.900" fill="#ccdaea" stroke="#c0d0e4" stroke-width=".9"/><path d="M2 4.500h5" stroke="#7a8ca8" stroke-width="1"/></svg><div class="ln" style="left:0;top:142px;width:18px">19</div><div class="code" style="left:30px;top:142px">    <span class="k">public</span> String novoParamCompra(Parametros <span class="v">p</span>,PedidoBean <span class="v">pedido</span>, DatasBean <span class="v">data</span>, HttpSession <span class="v">session</span>) {</div><div class="ln" style="left:0;top:162px;width:18px">20</div><div class="code" style="left:30px;top:162px"></div><div class="ln" style="left:0;top:182px;width:18px">21</div><div class="code" style="left:30px;top:182px"></div><div class="ln" style="left:0;top:202px;width:18px">22</div><div class="code" style="left:30px;top:202px">        <span class="oc">AnaliseDeCompra</span> <span class="v">analiseCompra</span> = <span class="k">new</span> <span class="oc">AnaliseDeCompra</span>(<span class="v">p</span>);</div><div class="ln" style="left:0;top:222px;width:18px">23</div><div class="code" style="left:30px;top:222px">        CompraBean <span class="v">compra</span> = <span class="v">analiseCompra</span>.calculaAnaliseDeCompra(<span class="v">p</span>);</div><div class="ln" style="left:0;top:242px;width:18px">24</div><div class="code" style="left:30px;top:242px">        <span class="v">analiseCompra</span>.calculaAnaliseDeCompra(<span class="v">p</span>);</div><div class="ln" style="left:0;top:262px;width:18px">25</div><div class="code" style="left:30px;top:262px">        AnaliseDeVenda <span class="v">analiseVenda</span> = <span class="k">new</span> AnaliseDeVenda();</div><div class="ln" style="left:0;top:282px;width:18px">26</div><div class="code" style="left:30px;top:282px">        VendaBean <span class="v">venda</span> = <span class="v">analiseVenda</span>.calculaAnaliseDeVenda(<span class="v">p</span>, <span class="v">compra</span>);</div><div class="ln" style="left:0;top:302px;width:18px">27</div><div class="code" style="left:30px;top:302px"></div><div class="ln" style="left:0;top:322px;width:18px">28</div><div class="code" style="left:30px;top:322px"></div><div class="ln" style="left:0;top:342px;width:18px">29</div><div class="code" style="left:30px;top:342px">        <span class="v">session</span>.setAttribute(<span class="s">&quot;venda&quot;</span>, <span class="v">venda</span>);</div><div class="ln" style="left:0;top:362px;width:18px">30</div><div class="code" style="left:30px;top:362px">        <span class="v">session</span>.setAttribute(<span class="s">&quot;compra&quot;</span>, <span class="v">compra</span>);</div><div class="ln" style="left:0;top:382px;width:18px">31</div><div class="code" style="left:30px;top:382px">        <span class="v">session</span>.setAttribute(<span class="s">&quot;novoParamCompra&quot;</span>, <span class="v">p</span>);</div><div class="ln" style="left:0;top:402px;width:18px">32</div><div class="code" style="left:30px;top:402px">        <span class="v">session</span>.setAttribute(<span class="s">&quot;pedido&quot;</span>, <span class="v">pedido</span>);</div><div class="ln" style="left:0;top:422px;width:18px">33</div><div class="code" style="left:30px;top:422px">        <span class="v">session</span>.setAttribute(<span class="s">&quot;data&quot;</span>, <span class="v">data</span>);</div><div class="ln" style="left:0;top:442px;width:18px">34</div><div class="code" style="left:30px;top:442px">        <span class="v">session</span>.setAttribute(<span class="s">&quot;analise&quot;</span>, <span class="v">analiseCompra</span>);</div><div class="ln" style="left:0;top:462px;width:18px">35</div><div class="code" style="left:30px;top:462px"></div><div class="ln" style="left:0;top:482px;width:18px">36</div><div class="code" style="left:30px;top:482px">        <span class="k">return</span> <span class="s">&quot;Planilha/analise&quot;</span>;</div><div class="ln" style="left:0;top:502px;width:18px">37</div><div class="code" style="left:30px;top:502px">        <span class="c">//return &quot;forward:adicionaNovoParamVenda&quot;;</span></div><div class="ln" style="left:0;top:522px;width:18px">38</div><div class="code" style="left:30px;top:522px">    }</div><div class="ln" style="left:0;top:542px;width:18px">39</div><div class="code" style="left:30px;top:542px"></div><div class="ln" style="left:0;top:562px;width:18px">40</div><div class="code" style="left:30px;top:562px">    <span class="an">@RequestMapping</span>(<span class="s">&quot;adicionaNovoParamVenda&quot;</span>)</div><svg style="left:18px;top:565px" width="9" height="9" viewBox="0 0 9 9"><circle cx="4.500" cy="4.500" r="3.900" fill="#ccdaea" stroke="#c0d0e4" stroke-width=".9"/><path d="M2 4.500h5" stroke="#7a8ca8" stroke-width="1"/></svg><div class="ln" style="left:0;top:582px;width:18px">41</div><div class="code" style="left:30px;top:582px">    <span class="k">public</span> String novoParamVenda(HttpSession <span class="v">session</span>) {</div><div class="ln" style="left:0;top:602px;width:18px">42</div><div class="code" style="left:30px;top:602px">    <span class="c">//  Parametros p = (Parametros) session.getAttribute(&quot;novoParamCompra&quot;);</span></div><div class="ln" style="left:0;top:622px;width:18px">43</div><div class="code" style="left:30px;top:622px">    <span class="c">//  AnaliseDeCompra analiseCompra = (AnaliseDeCompra) session.getAttribute(&quot;analise&quot;);</span></div><div class="ln" style="left:0;top:642px;width:18px">44</div><div class="code" style="left:30px;top:642px">    <span class="c">//  PedidoBean pedido = (PedidoBean) session.getAttribute(&quot;pedido&quot;);</span></div><div class="ln" style="left:0;top:662px;width:18px">45</div><div class="code" style="left:30px;top:662px">    <span class="c">//  DatasBean datas = (DatasBean) session.getAttribute(&quot;datas&quot;);</span></div><svg style="left:373px;top:47px" width="10" height="14" viewBox="0 0 10 14"><rect x=".500" y=".500" width="8" height="12" fill="#fff" stroke="#8a8a8a" stroke-width=".9"/><path d="M3 10.500h1M5 10.500h1" stroke="#8a8a8a" stroke-width="1"/></svg></div><div class="a" style="left:1888px;top:94px;width:31px;height:57px;background:#e1e6f6;border-radius:6px;box-sizing:border-box;border:1px solid #fdfdff;box-shadow:0 0 0 1px #a9b2c9;"></div><svg style="left:1895px;top:99px" width="18" height="3" viewBox="0 0 18 3"><path d="M0 1h2M5 1h2M10 1h2M15 1h2" stroke="#8a8572" stroke-width="1.500"/></svg><svg style="left:1899px;top:110px" width="9" height="9" viewBox="0 0 9 9"><rect x="2.500" y=".500" width="6" height="4.500" fill="#e8ecf8" stroke="#6a6058" stroke-width="1"/><path d="M2.500 1.500h6" stroke="#6a6058" stroke-width="1"/><rect x=".500" y="3.500" width="6" height="4.500" fill="#f4f6fc" stroke="#6a6058" stroke-width="1"/><path d="M.500 4.500h6" stroke="#6a6058" stroke-width="1"/></svg><span id="t52" class="t" style="left:1895px;top:129px;font-size:11px;color:#3f5a8a;font-weight:normal;font-family:'Liberation Sans',sans-serif;letter-spacing:-0.816px;">(x)=</span><div class="a" style="left:393px;top:819px;width:1491px;height:181px;background:#fff;border-radius:7px 7px 6px 6px;box-sizing:border-box;border:1px solid #eef1f8;"></div><div class="a" style="left:394px;top:820px;width:1489px;height:29px;background:#f4f6fb;border-radius:6px 6px 0 0;"></div><div class="a" style="left:549px;top:820px;width:103px;height:29px;background:linear-gradient(#dce4f0,#f1f5fa 45%,#ffffff 90%);border-radius:6px 6px 0 0;"></div><svg style="left:399px;top:828px" width="15" height="15" viewBox="0 0 15 15"><g stroke="#9db8b4" stroke-width=".9" fill="none"><path d="M5.500 5.500L2.500 2.500M9.500 5.500L12.500 2.500M4.500 7.500L.500 6.500M10.500 7.500L14.500 6.500M4.500 9.500L1 11M10.500 9.500L14 11M5.500 11.500L3.500 14.500M9.500 11.500L11.500 14.500M7.500 3V.500"/></g><ellipse cx="7.500" cy="8.300" rx="3.200" ry="4.300" fill="#c4dcc4" stroke="#8fb0a8" stroke-width="1"/><ellipse cx="7.500" cy="4" rx="1.700" ry="1.200" fill="#a8c8c0"/></svg><span id="t53" class="t" style="left:418px;top:828px;font-size:15.5px;color:#8d8d8d;font-weight:normal;font-family:'Liberation Sans',sans-serif;letter-spacing:-0.338px;">Debug</span><svg style="left:474px;top:828px" width="14" height="14" viewBox="0 0 14 14"><path d="M3 1v12M7 1v12M11 1v12" stroke="#9aa0a8" stroke-width="1"/><circle cx="3" cy="9" r="1.800" fill="#c8d8a0" stroke="#8a9a6a" stroke-width=".7"/><rect x="5.300" y="3" width="3.400" height="3.400" fill="#f0d890" stroke="#b89a4a" stroke-width=".7"/><circle cx="11" cy="10" r="1.800" fill="#a8c0e0" stroke="#6f8ab4" stroke-width=".7"/></svg><span id="t54" class="t" style="left:492px;top:828px;font-size:15.5px;color:#8d8d8d;font-weight:bold;font-family:'Liberation Sans',sans-serif;letter-spacing:-0.842px;">Servers</span><svg style="left:555px;top:828px" width="14" height="13" viewBox="0 0 16 15.5"><rect x="1.500" y="1.500" width="13" height="9" rx="1" fill="#eef3fb" stroke="#2a4f9e" stroke-width="2"/><path d="M4 4.500h6M4 7h8" stroke="#2a4f9e" stroke-width="1.200"/><rect x="6" y="11.500" width="4" height="2" fill="#2a4f9e"/><rect x="3" y="13.500" width="10" height="1.800" fill="#2a4f9e"/></svg><span id="t55" class="t" style="left:573px;top:828px;font-size:15.5px;color:#000;font-weight:normal;font-family:'Liberation Sans',sans-serif;letter-spacing:-0.696px;">Console</span><svg style="left:633px;top:829px" width="11" height="11" viewBox="0 0 11 11"><path d="M1 1h2.200l2.300 2.700 2.300-2.700h2.200v1.500l-2.800 3 2.800 3v1.500h-2.200l-2.300-2.700-2.300 2.700h-2.200v-1.500l2.800-3-2.800-3z" fill="#fff" stroke="#444" stroke-width=".9" stroke-linejoin="round"/></svg><svg style="left:1526px;top:824px" width="16" height="16" viewBox="0 0 16 16"><rect x="3" y="3" width="10.500" height="10.500" rx="1.500" fill="#e8242c" stroke="#c01018" stroke-width="1"/><rect x="4.500" y="4.500" width="7.500" height="3" fill="#f2545a" opacity=".7"/></svg><svg style="left:1549px;top:824px" width="16" height="16" viewBox="0 0 16 16"><path d="M3.500 3.500l9.500 9.500M13 3.500L3.500 13" stroke="#a8a8a8" stroke-width="4" stroke-linecap="round"/></svg><svg style="left:1573px;top:824px" width="16" height="16" viewBox="0 0 16 16"><path d="M2 2l6.500 6.500M8.500 2L2 8.500" stroke="#c8c8c8" stroke-width="2.600" stroke-linecap="round"/><path d="M6 6l8 8M14 6l-8 8" stroke="#a8a8a8" stroke-width="3.600" stroke-linecap="round"/></svg><div class="a" style="left:1594px;top:823px;width:1px;height:19px;background:#8c8c8c;"></div><svg style="left:1603px;top:824px" width="16" height="16" viewBox="0 0 16 16"><path d="M1.500 .500h7l2.500 2.500v10.500h-9.500z" fill="#fdfcf4" stroke="#a8975a" stroke-width="1"/><path d="M3.500 4h4M3.500 6.500h5M3.500 9h5M3.500 11.500h3" stroke="#7f9fd4" stroke-width="1"/><path d="M9.500 9.500l5.500 5.500M15 9.500l-5.500 5.500" stroke="#6a6a6a" stroke-width="2"/></svg><svg style="left:1626px;top:824px" width="16" height="16" viewBox="0 0 16 16"><rect x="6" y="1.500" width="9" height="12.500" fill="#f4f7fc" stroke="#6f8fbe" stroke-width="1"/><path d="M11.500 2v12" stroke="#6f8fbe" stroke-width="1"/><rect x="12.500" y="3.500" width="1.600" height="2" fill="#5f86c8"/><rect x="12.500" y="9.500" width="1.600" height="2" fill="#5f86c8"/><rect x="1" y="9" width="7.500" height="6" rx="1" fill="#f2c23a" stroke="#a87808" stroke-width="1"/><path d="M2.700 9v-2.200c0-2.800 4-2.800 4 0v2.200" fill="none" stroke="#a87808" stroke-width="1.300"/></svg><svg style="left:1649px;top:824px" width="16" height="16" viewBox="0 0 16 16"><path d="M1.500 1.500h7l2 2v9.500h-9z" fill="#fdfcf4" stroke="#c8a44a" stroke-width="1"/><path d="M3.500 4.500h4M3.500 7h3M3.500 9.500h3" stroke="#7f9fd4" stroke-width="1"/><path d="M14.500 2.500v7h-4.500v-2l-3.500 3.200 3.500 3.200v-2h7v-9.400z" fill="#fbe9a8" stroke="#d8a43a" stroke-width=".9"/></svg><div class="a" style="left:1669px;top:821px;width:24px;height:21px;background:#cce4f9;box-sizing:border-box;border:1px solid #90c8f6;"></div><div class="a" style="left:1692px;top:821px;width:24px;height:21px;background:#cce4f9;box-sizing:border-box;border:1px solid #90c8f6;"></div><svg style="left:1673px;top:824px" width="16" height="16" viewBox="0 0 16 16"><rect x="5.500" y="1.500" width="10" height="7.500" fill="#f4f8fd" stroke="#3f6fb8" stroke-width="1.100"/><path d="M7.500 4h6M7.500 6.500h6" stroke="#3f6fb8" stroke-width="1"/><rect x="1.500" y="6.500" width="7" height="5.500" fill="#dce8f8" stroke="#3f6fb8" stroke-width="1.100"/><rect x="3.500" y="12.500" width="3" height="1.500" fill="#2d5fb0"/><rect x="2" y="14" width="6" height="1.300" fill="#2d5fb0"/></svg><svg style="left:1696px;top:824px" width="16" height="16" viewBox="0 0 16 16"><rect x="5.500" y="1.500" width="10" height="7.500" fill="#f4f8fd" stroke="#3f6fb8" stroke-width="1.100"/><path d="M7.500 3.500l3 3M10.500 3.500l-3 3" stroke="#e02828" stroke-width="1.400"/><path d="M12 4h2M12 6.500h2" stroke="#3f6fb8" stroke-width="1"/><rect x="1.500" y="6.500" width="7" height="5.500" fill="#dce8f8" stroke="#3f6fb8" stroke-width="1.100"/><rect x="3.500" y="12.500" width="3" height="1.500" fill="#2d5fb0"/><rect x="2" y="14" width="6" height="1.300" fill="#2d5fb0"/></svg><div class="a" style="left:1717px;top:823px;width:1px;height:19px;background:#8c8c8c;"></div><svg style="left:1727px;top:824px" width="16" height="16" viewBox="0 0 16 16"><rect x="1.500" y="4.500" width="11.500" height="10" fill="#fbfcfe" stroke="#4f6fae" stroke-width="1"/><rect x="2" y="5" width="10.500" height="2.600" fill="#3f74c4"/><path d="M8.500 9.500l3.500-3.500" stroke="#555" stroke-width="1"/><path d="M10 5.500l3.500-4 2 1.800-4 3.500z" fill="#2fa040" stroke="#1d7a2c" stroke-width=".7"/></svg><svg style="left:1750px;top:824px" width="16" height="16" viewBox="0 0 16 16"><rect x="1.500" y="1.500" width="12" height="9" rx="1" fill="#f0f0f0" stroke="#9a9a9a" stroke-width="1.500"/><path d="M4 4.500h5M4 7h7" stroke="#9a9a9a" stroke-width="1"/><rect x="5.500" y="11" width="4" height="2" fill="#9a9a9a"/><rect x="3" y="13" width="9" height="1.400" fill="#9a9a9a"/></svg><svg style="left:1773px;top:830px" width="10" height="5" viewBox="0 0 10 5"><path d="M0 0h10l-5 5z" fill="#7a7a7a"/></svg><svg style="left:1792px;top:824px" width="16" height="16" viewBox="0 0 16 16"><rect x="1.500" y="3.500" width="13" height="11" fill="#fdfdf8" stroke="#9c8a5a"/><rect x="2" y="4" width="12" height="2.500" fill="#4a7fc9"/><path d="M14 14c-3 0-6-1-7-4" stroke="#f2e3a0" stroke-width="1.500" fill="none"/><path d="M12.500 0l1.200 2.300 2.300 1.200-2.300 1.200-1.200 2.300-1.200-2.300L9 3.500l2.300-1.200z" fill="#fff6c0" stroke="#d9a400" stroke-width=".8"/></svg><svg style="left:1815px;top:830px" width="10" height="5" viewBox="0 0 10 5"><path d="M0 0h10l-5 5z" fill="#000"/></svg><svg style="left:1836px;top:827px" width="11" height="5" viewBox="0 0 11 5"><rect x=".500" y=".500" width="9" height="3" fill="#fff" stroke="#585858" stroke-width="1"/></svg><svg style="left:1859px;top:827px" width="11" height="11" viewBox="0 0 11 11"><rect x=".500" y=".500" width="9" height="9" fill="#fff" stroke="#585858" stroke-width="1"/><path d="M.500 1.500h9" stroke="#585858" stroke-width="1"/></svg><span id="t56" class="t" style="left:396px;top:854px;font-size:15.5px;color:#000;font-weight:normal;font-family:'Liberation Sans',sans-serif;letter-spacing:-0.366px;">Tomcat v7.0 Server at localhost [Apache Tomcat] C:\Program Files\Java\jre1.8.0_221\bin\javaw.exe (15 de ago de 2019 09:20:27)</span><div class="a" style="left:396px;top:871px;width:1485px;height:1px;background:#a0a0a0;"></div><div class="code" style="left:398px;top:875px">Conectando ...</div><div class="code" style="left:398px;top:895px">enviado</div><div class="code" style="left:398px;top:915px">Conectando ...</div><div class="code" style="left:398px;top:935px">enviado</div><div class="a" style="left:1861px;top:873px;width:20px;height:105px;background:#f0f0f0;"></div><div class="a" style="left:1861px;top:935px;width:19px;height:21px;background:#cdcdcd;"></div><svg style="left:1865px;top:877px" width="12" height="12" viewBox="-6 -6 12 12"><path d="M-4.500 2.500L0 -2L4.500 2.500" fill="none" stroke="#505050" stroke-width="2"/></svg><svg style="left:1865px;top:960px" width="12" height="12" viewBox="-6 -6 12 12"><path d="M-4.500 -2.500L0 2L4.500 -2.500" fill="none" stroke="#505050" stroke-width="2"/></svg><div class="a" style="left:396px;top:978px;width:1485px;height:20px;background:#f0f0f0;"></div><div class="a" style="left:417px;top:978px;width:163px;height:19px;background:#cdcdcd;"></div><svg style="left:399px;top:981px" width="12" height="12" viewBox="-6 -6 12 12"><path d="M2.500 -4.500L-2 0L2.500 4.500" fill="none" stroke="#505050" stroke-width="2"/></svg><svg style="left:1843px;top:981px" width="12" height="12" viewBox="-6 -6 12 12"><path d="M-2.500 -4.500L2 0L-2.500 4.500" fill="none" stroke="#505050" stroke-width="2"/></svg><span id="t57" class="t" style="left:3px;top:1008px;font-size:15.5px;color:#000;font-weight:normal;font-family:'Liberation Sans',sans-serif;letter-spacing:-0.375px;">0 items selected</span><svg style="left:1564px;top:1009px" width="2" height="20" viewBox="0 0 2 20"><rect x="0" y="0" width="2" height="2" fill="#a89f8a"/><rect x="0" y="5" width="2" height="2" fill="#a89f8a"/><rect x="0" y="10" width="2" height="2" fill="#a89f8a"/><rect x="0" y="15" width="2" height="2" fill="#a89f8a"/></svg><div class="a" style="left:0px;top:1030px;width:1920px;height:50px;background:linear-gradient(90deg,#111317 0%,#0f1216 30%,#0c1014 55%,#0a1a22 66%,#141a10 74%,#1c1c0c 80%,#1a1410 90%,#22141a 100%);"></div><svg style="left:19px;top:1044px" width="22" height="22" viewBox="0 0 22 22"><path d="M0 3.200l8.600-1.200v8.300h-8.600zM9.800 1.800l11.200-1.600v10.100h-11.200zM0 11.500h8.600v8.300l-8.600-1.200zM9.800 11.500h11.200v10.100l-11.200-1.600z" fill="#fff"/></svg><div class="a" style="left:60px;top:1030px;width:430px;height:50px;background:#f2f2f2;border-top:1px solid #bdbdbd;box-sizing:border-box;"></div><svg style="left:71px;top:1041px" width="28" height="28" viewBox="0 0 28 28"><circle cx="14.200" cy="14" r="12.300" fill="none" stroke="#9a9a9a" stroke-width="1.800"/><circle cx="14.200" cy="14" r="11.200" fill="none" stroke="#0a0a0a" stroke-width="3.200"/></svg><span id="t58" class="t" style="left:111px;top:1047px;font-size:18px;color:#3a3a3a;font-weight:normal;font-family:'Liberation Sans',sans-serif;letter-spacing:-0.120px;">Digite aqui para pesquisar</span><svg style="left:457px;top:1044px" width="14" height="22" viewBox="0 0 14 22"><rect x="3.500" y=".800" width="7" height="13" rx="3.500" fill="none" stroke="#222" stroke-width="1.400"/><path d="M6 3v9" stroke="#222" stroke-width="2.500" stroke-linecap="round" opacity=".85"/><path d="M.800 10.500c0 8 12.400 8 12.400 0M7 16.500v4M3.500 20.800h7" fill="none" stroke="#222" stroke-width="1.400"/></svg><svg style="left:509px;top:1045px" width="24" height="21" viewBox="0 0 24 21"><rect x="1" y="5.500" width="13" height="10" fill="none" stroke="#fff" stroke-width="1.500"/><path d="M1 1.500h13M1 19.500h13M19.500 1v3M19.500 17v3" stroke="#fff" stroke-width="1.500"/><rect x="18.500" y="6.500" width="2" height="8" fill="#fff"/></svg><svg style="left:569px;top:1040px" width="32" height="32" viewBox="0 0 32 32"><ellipse cx="15" cy="11" rx="13" ry="8" transform="rotate(-20 15 11)" fill="#f4f4f4" stroke="#d02020" stroke-width="1.500"/><ellipse cx="14" cy="15" rx="11" ry="6" transform="rotate(-20 14 15)" fill="#c8c8c8"/><path d="M13 6l6 18M22 8l-8 14" stroke="#909090" stroke-width="1.200"/><circle cx="14" cy="25" r="3" fill="none" stroke="#1f7fd0" stroke-width="2"/><circle cx="22" cy="24" r="3" fill="none" stroke="#1f7fd0" stroke-width="2"/></svg><svg style="left:630px;top:1039px" width="34" height="34" viewBox="0 0 34 34"><g stroke="#d8d8d8" stroke-width="1.300" fill="none"><path d="M17 2v30M3 9l28 16M31 9L3 25"/><path d="M17 6l9.500 5.500v11L17 28l-9.500-5.500v-11z"/><path d="M17 11l5 3v6l-5 3-5-3v-6z"/></g><path d="M5 19c3-5 6-5 9-1s6 3 8-1 5-3 7 0" stroke="#e01818" stroke-width="2.800" fill="none"/></svg><div class="a" style="left:677px;top:1030px;width:62px;height:50px;background:#3e4348;"></div><div class="a" style="left:677px;top:1077px;width:62px;height:3px;background:#9bdcf0;"></div><svg style="left:691px;top:1039px" width="34" height="34" viewBox="0 0 34 34"><circle cx="16" cy="17" r="14.500" fill="#f29a1f"/><circle cx="18.500" cy="17" r="13.800" fill="#2c2255"/><path d="M6.500 12.500h25M5.500 17h27M6.500 21.500h25" stroke="#e8e8f4" stroke-width="2.300"/><path d="M18.500 3.200a13.800 13.800 0 0 1 0 27.600" fill="none" stroke="#2c2255" stroke-width="0"/></svg><svg style="left:753px;top:1037px" width="36" height="36" viewBox="0 0 36 36"><g transform="rotate(45 18 18)"><rect x="6" y="6" width="11.500" height="11.500" rx="1.500" fill="#e8504a"/><rect x="18.500" y="6" width="11.500" height="11.500" rx="1.500" fill="#6fbf4a"/><rect x="6" y="18.500" width="11.500" height="11.500" rx="1.500" fill="#5f9ae8"/><rect x="18.500" y="18.500" width="11.500" height="11.500" rx="1.500" fill="#f2c23a"/></g><path d="M18 9v18M18 17l6-4" stroke="#1a1a1a" stroke-width="2" fill="none"/><circle cx="18" cy="9" r="2.200" fill="#1a1a1a"/><circle cx="18" cy="27" r="2.200" fill="#1a1a1a"/><circle cx="24" cy="13" r="2.200" fill="#1a1a1a"/></svg><svg style="left:817px;top:1043px" width="29" height="24" viewBox="0 0 29 24"><rect x=".500" y=".500" width="28" height="23" fill="#050505" stroke="#b8b8b8" stroke-width="1"/><rect x="1" y="1" width="27" height="3" fill="#d8d8d8"/><path d="M4 8h3M8 8h6" stroke="#d0d0d0" stroke-width="1"/></svg><svg style="left:880px;top:1041px" width="28" height="28" viewBox="0 0 28 28"><path d="M1 4h9l2 2.500h15v17h-26z" fill="#f2b632"/><path d="M1 8.500h26v15h-26z" fill="#fbd768"/><path d="M7 14h14v9.500h-14z" fill="#3f9ae8"/><path d="M10 18h8v5.500h-8z" fill="#fbd768"/></svg><svg style="left:942px;top:1041px" width="28" height="28" viewBox="0 0 28 28"><g transform="translate(14,14)"><g fill="#fff"><rect x="-2.600" y="-12.500" width="5.200" height="6" transform="rotate(0)"/><rect x="-2.600" y="-12.500" width="5.200" height="6" transform="rotate(45)"/><rect x="-2.600" y="-12.500" width="5.200" height="6" transform="rotate(90)"/><rect x="-2.600" y="-12.500" width="5.200" height="6" transform="rotate(135)"/><rect x="-2.600" y="-12.500" width="5.200" height="6" transform="rotate(180)"/><rect x="-2.600" y="-12.500" width="5.200" height="6" transform="rotate(225)"/><rect x="-2.600" y="-12.500" width="5.200" height="6" transform="rotate(270)"/><rect x="-2.600" y="-12.500" width="5.200" height="6" transform="rotate(315)"/></g><circle r="9" fill="#fff"/><circle r="4.600" fill="#161616"/></g></svg><svg style="left:1003px;top:1040px" width="30" height="30" viewBox="0 0 30 30"><circle cx="15" cy="15" r="14" fill="#db4437"/><path d="M15 15L2.900 8A14 14 0 0 0 9 27.700z" fill="#0f9d58"/><path d="M15 15l-6 12.700A14 14 0 0 0 27.100 8H15z" fill="#ffcd40"/><path d="M15 15L2.900 8A14 14 0 0 1 27.100 8z" fill="#db4437"/><circle cx="15" cy="15" r="6.500" fill="#fff"/><circle cx="15" cy="15" r="5.200" fill="#4285f4"/></svg><svg style="left:1065px;top:1040px" width="30" height="30" viewBox="0 0 30 30"><rect x="0" y="0" width="30" height="30" rx="4" fill="#fb7a24"/><path d="M7 8c3-1 5 1 8 4 3-3 5-5 8-4 2 1 2 4 0 7 2 3 2 6 0 7-3 1-5-1-8-4-3 3-5 5-8 4-2-1-2-4 0-7-2-3-2-6 0-7z" fill="#fff"/><path d="M10 11.500l3 3.500-3 3.500M20 11.500l-3 3.500 3 3.500" stroke="#fb7a24" stroke-width="2" fill="none"/></svg><svg style="left:1126px;top:1040px" width="32" height="30" viewBox="0 0 32 30"><rect x="9" y="1" width="22" height="28" rx="1.500" fill="#2b7cd3"/><rect x="9" y="1" width="22" height="7" fill="#41a5ee"/><rect x="9" y="15" width="22" height="7" fill="#185abd"/><rect x="9" y="22" width="22" height="7" rx="1.500" fill="#103f91"/><rect x="0" y="7" width="17" height="17" rx="1.500" fill="#185abd"/><text x="2.500" y="20.500" font-family="Liberation Sans,sans-serif" font-size="13" font-weight="bold" fill="#fff">W</text></svg><svg style="left:1188px;top:1040px" width="32" height="30" viewBox="0 0 32 30"><rect x="9" y="1" width="22" height="28" rx="1.500" fill="#21a366"/><rect x="20" y="1" width="11" height="7" fill="#33c481"/><rect x="9" y="8" width="11" height="7" fill="#107c41"/><rect x="9" y="15" width="22" height="7" fill="#185c37"/><rect x="20" y="15" width="11" height="7" fill="#107c41"/><rect x="0" y="7" width="17" height="17" rx="1.500" fill="#107c41"/><text x="4" y="20.500" font-family="Liberation Sans,sans-serif" font-size="13" font-weight="bold" fill="#fff">X</text></svg><div class="a" style="left:807px;top:1078px;width:50px;height:2px;background:#9bdcf0;"></div><div class="a" style="left:869px;top:1078px;width:50px;height:2px;background:#9bdcf0;"></div><div class="a" style="left:931px;top:1078px;width:50px;height:2px;background:#9bdcf0;"></div><div class="a" style="left:993px;top:1078px;width:50px;height:2px;background:#9bdcf0;"></div><div class="a" style="left:1055px;top:1078px;width:50px;height:2px;background:#9bdcf0;"></div><div class="a" style="left:1117px;top:1078px;width:50px;height:2px;background:#9bdcf0;"></div><div class="a" style="left:1179px;top:1078px;width:50px;height:2px;background:#9bdcf0;"></div><svg style="left:1616px;top:1044px" width="24" height="22" viewBox="0 0 24 22"><circle cx="15" cy="5" r="3.300" fill="none" stroke="#fff" stroke-width="1.400"/><path d="M9.500 15c0-6 11-6 11 0" fill="none" stroke="#fff" stroke-width="1.400"/><circle cx="7" cy="10" r="3" fill="#161616" stroke="#fff" stroke-width="1.400"/><path d="M2 20c0-6 10-6 10 0" fill="none" stroke="#fff" stroke-width="1.400"/></svg><svg style="left:1664px;top:1050px" width="16" height="10" viewBox="0 0 16 10"><path d="M1 8.500l7-7 7 7" fill="none" stroke="#fff" stroke-width="1.400"/></svg><svg style="left:1692px;top:1047px" width="22" height="16" viewBox="0 0 22 16"><rect x="4.500" y="3.500" width="15" height="9" fill="none" stroke="#fff" stroke-width="1.200"/><rect x="6.500" y="5.500" width="11" height="5" fill="#fff"/><rect x="19.500" y="6" width="2" height="4" fill="#fff"/><path d="M1.500 .500v2.500M4 .500v2.500M.500 3h4.500v2.500h-4.500zM2.700 5.500v3h2" stroke="#fff" stroke-width="1" fill="none"/></svg><span id="t59" class="t" style="left:1725px;top:1038px;font-size:14px;color:#fff;font-weight:normal;font-family:'Liberation Sans',sans-serif;letter-spacing:-0.781px;">POR</span><span id="t60" class="t" style="left:1723px;top:1060px;font-size:14px;color:#fff;font-weight:normal;font-family:'Liberation Sans',sans-serif;letter-spacing:-0.504px;">PTB2</span><span id="t61" class="t" style="left:1790px;top:1037px;font-size:14px;color:#fff;font-weight:normal;font-family:'Liberation Sans',sans-serif;letter-spacing:0.191px;">10:36</span><span id="t62" class="t" style="left:1771px;top:1060px;font-size:14px;color:#fff;font-weight:normal;font-family:'Liberation Sans',sans-serif;letter-spacing:0.492px;">15/08/2019</span><svg style="left:1868px;top:1044px" width="22" height="22" viewBox="0 0 22 22"><path d="M1.500 1.500h19v14h-7l-3 3-3-3h-6z" fill="none" stroke="#fff" stroke-width="1.300"/></svg><div class="a" style="left:1914px;top:1030px;width:1px;height:50px;background:#6a6a6a;"></div>
</div>
</body></html>
